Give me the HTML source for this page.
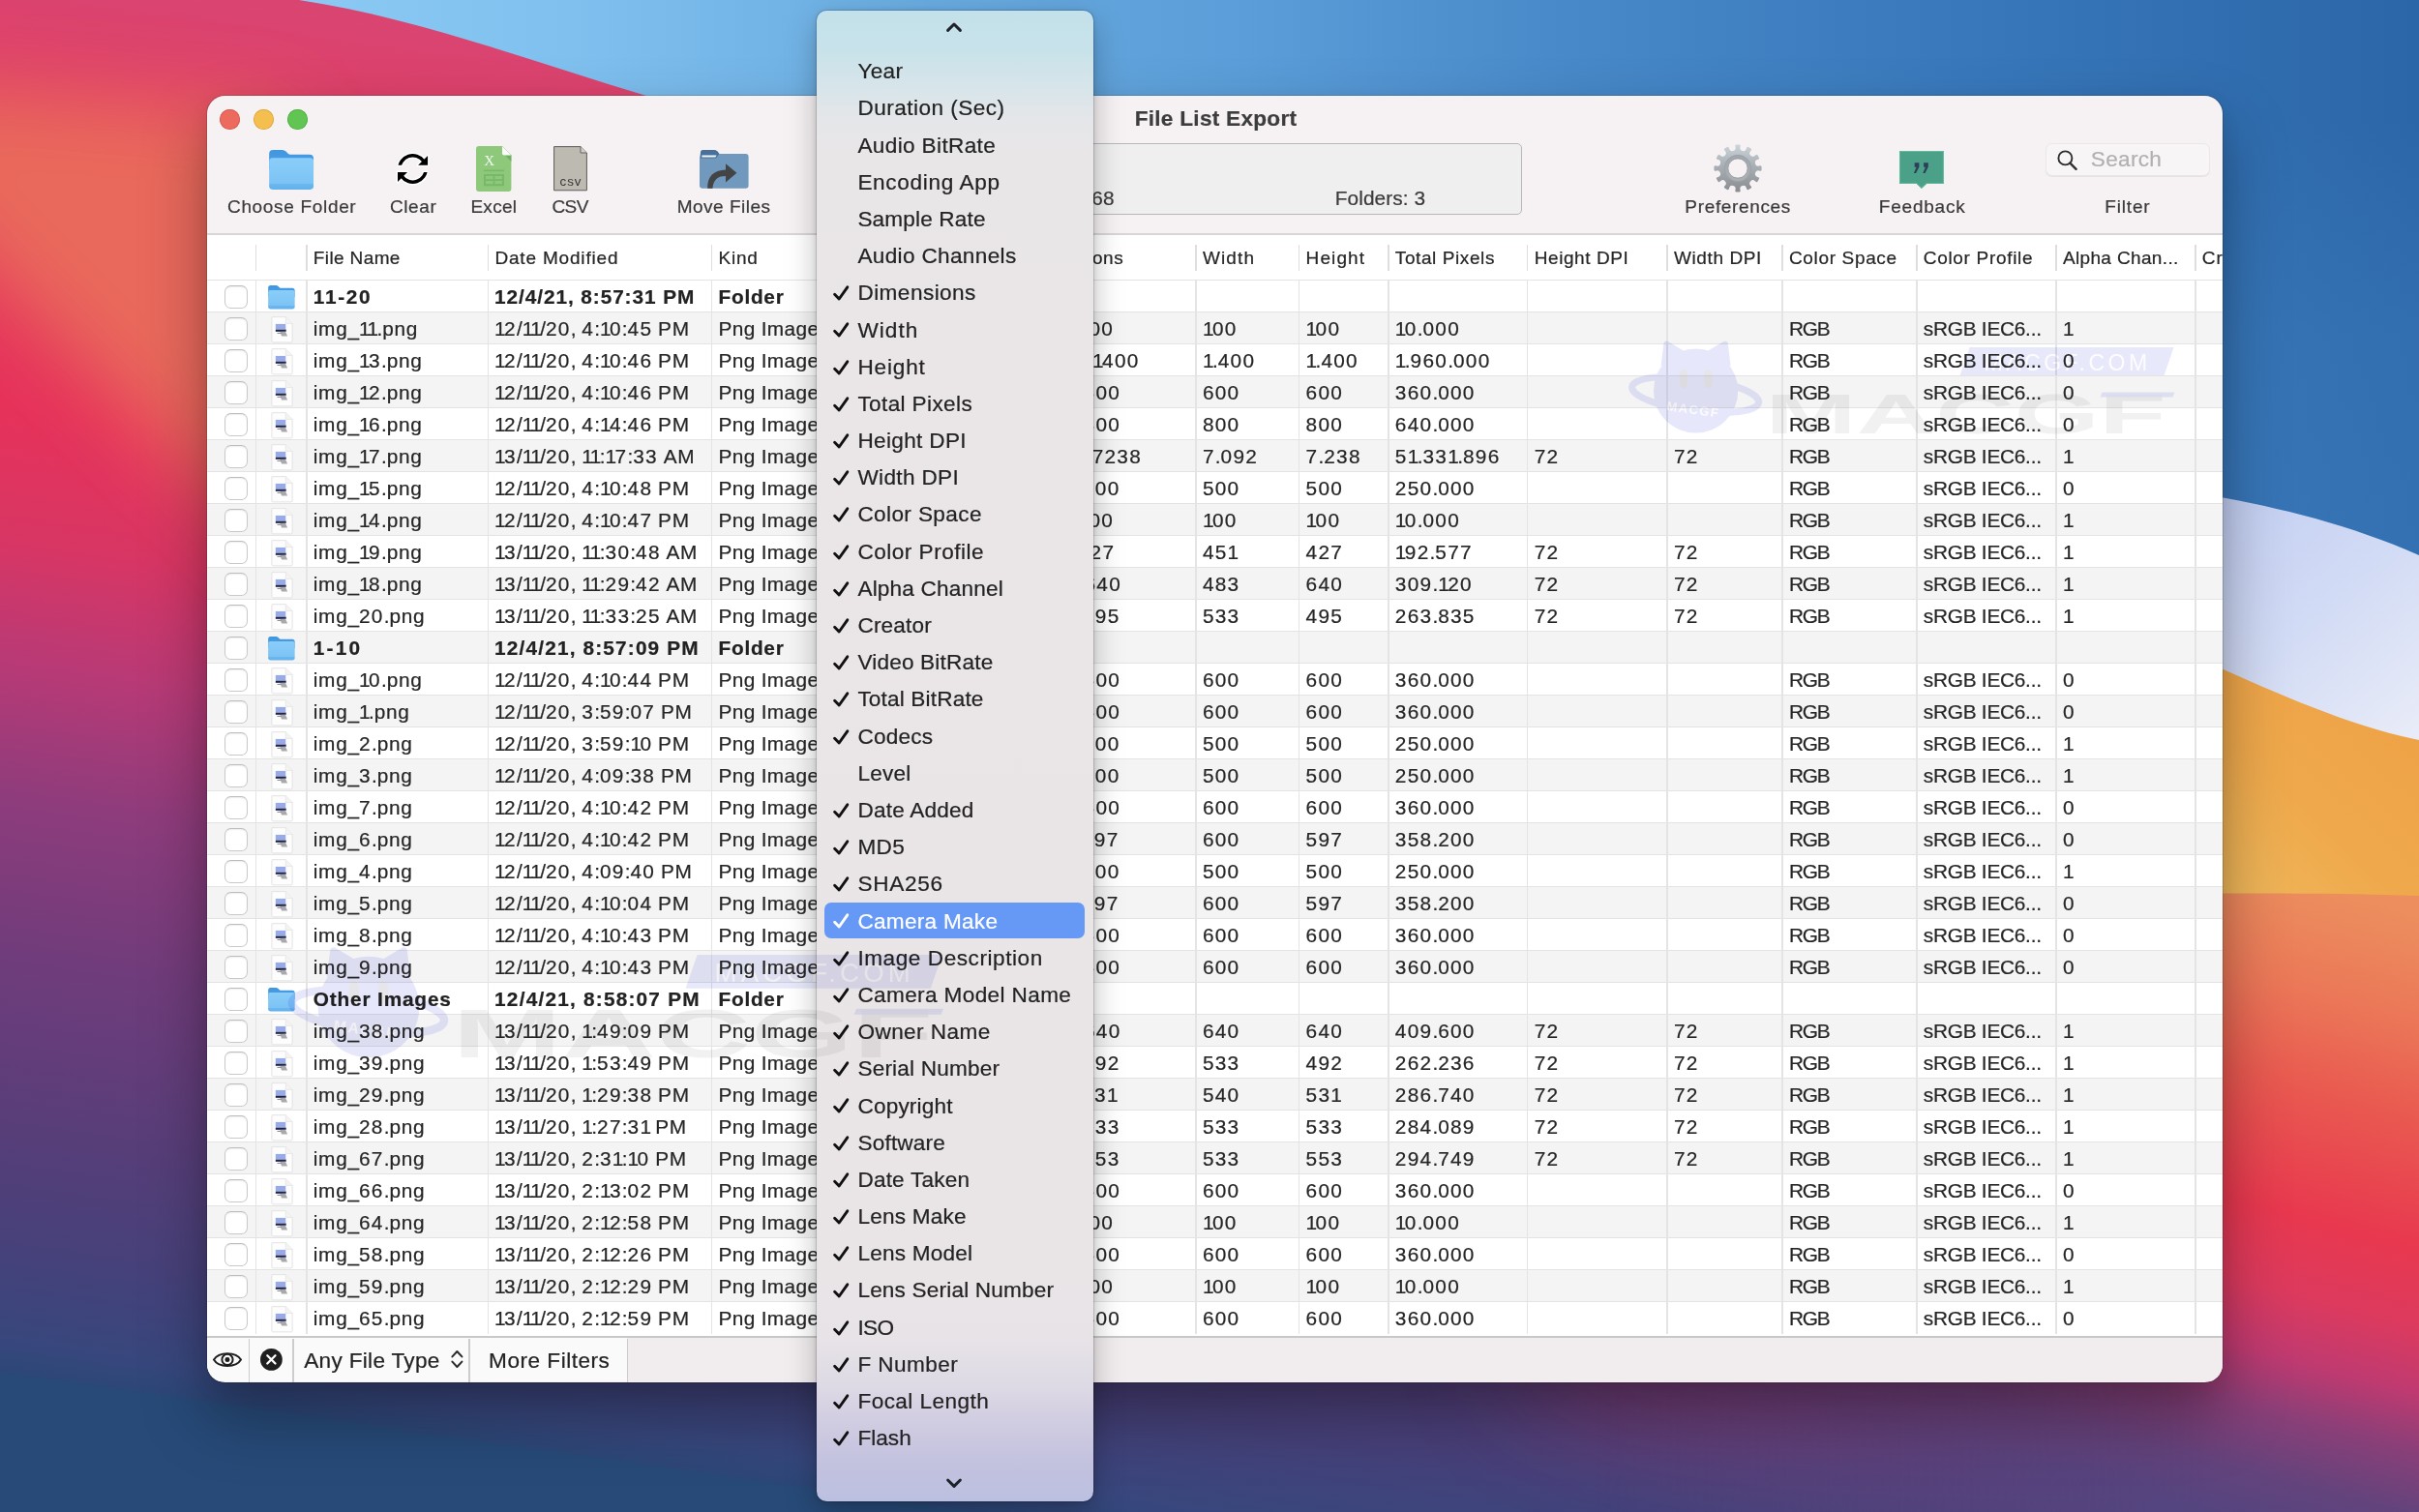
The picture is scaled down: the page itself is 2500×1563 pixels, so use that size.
<!DOCTYPE html>
<html><head><meta charset="utf-8"><title>File List Export</title>
<style>
html,body{margin:0;padding:0;}
body{width:2500px;height:1563px;overflow:hidden;position:relative;background:#3a4a78;font-family:"Liberation Sans",sans-serif;}
.t{position:absolute;white-space:nowrap;font-family:"Liberation Sans",sans-serif;-webkit-text-stroke:0.22px currentColor;}
.t i{font-style:normal}.d{letter-spacing:.062em}.o{letter-spacing:-.075em}.l{letter-spacing:.034em}
</style></head><body>

<svg id="wall" width="2500" height="1563" viewBox="0 0 2500 1563" style="position:absolute;left:0;top:0">
<defs>
  <linearGradient id="gBlue" x1="300" y1="0" x2="2500" y2="0" gradientUnits="userSpaceOnUse">
    <stop offset="0" stop-color="#8ccaf3"/>
    <stop offset="0.13" stop-color="#7fc0ef"/>
    <stop offset="0.30" stop-color="#69abe0"/>
    <stop offset="0.45" stop-color="#5a9dd8"/>
    <stop offset="0.60" stop-color="#4889c9"/>
    <stop offset="0.80" stop-color="#3777ba"/>
    <stop offset="1" stop-color="#2b66a8"/>
  </linearGradient>
  <linearGradient id="gBlueV" x1="0" y1="120" x2="0" y2="580" gradientUnits="userSpaceOnUse">
    <stop offset="0" stop-color="#4a8ccc" stop-opacity="0"/>
    <stop offset="0.5" stop-color="#4a8ccc" stop-opacity="0.22"/>
    <stop offset="1" stop-color="#4a8ccc" stop-opacity="0.28"/>
  </linearGradient>
  <!-- diagonal red->purple->navy gradient ; isolines tilted ~14.6deg -->
  <linearGradient id="gRed" gradientUnits="userSpaceOnUse" x1="320" y1="-100" x2="100" y2="1433">
    <stop offset="0" stop-color="#d4487a"/>
    <stop offset="0.08" stop-color="#da4470"/>
    <stop offset="0.22" stop-color="#e43a5e"/>
    <stop offset="0.36" stop-color="#e6325a"/>
    <stop offset="0.45" stop-color="#d83664"/>
    <stop offset="0.53" stop-color="#b83a76"/>
    <stop offset="0.62" stop-color="#8e3c7c"/>
    <stop offset="0.72" stop-color="#713c7b"/>
    <stop offset="0.84" stop-color="#573e79"/>
    <stop offset="0.92" stop-color="#46417a"/>
    <stop offset="0.98" stop-color="#37477d"/>
    <stop offset="1.04" stop-color="#2c4777"/>
    <stop offset="1.12" stop-color="#274a78"/>
  </linearGradient>
  <linearGradient id="gLight" x1="2296" y1="520" x2="2500" y2="760" gradientUnits="userSpaceOnUse">
    <stop offset="0" stop-color="#c3cff3"/>
    <stop offset="0.5" stop-color="#d3dcf5"/>
    <stop offset="1" stop-color="#e9ecf8"/>
  </linearGradient>
  <linearGradient id="gOrange" x1="2500" y1="700" x2="2296" y2="920" gradientUnits="userSpaceOnUse">
    <stop offset="0" stop-color="#eea045"/>
    <stop offset="0.6" stop-color="#efa94c"/>
    <stop offset="1" stop-color="#efb75a"/>
  </linearGradient>
  <linearGradient id="gCoral" x1="2400" y1="920" x2="2230" y2="1563" gradientUnits="userSpaceOnUse">
    <stop offset="0" stop-color="#ec8e5e"/>
    <stop offset="0.155" stop-color="#eb7858"/>
    <stop offset="0.30" stop-color="#e95a50"/>
    <stop offset="0.50" stop-color="#e8384f"/>
    <stop offset="0.62" stop-color="#dc3a5e"/>
    <stop offset="0.716" stop-color="#c03a70"/>
    <stop offset="0.806" stop-color="#8a3f78"/>
    <stop offset="0.90" stop-color="#64437c"/>
    <stop offset="0.975" stop-color="#55457f"/>
  </linearGradient>
  <linearGradient id="gMask" x1="1650" y1="0" x2="2280" y2="0" gradientUnits="userSpaceOnUse"><stop offset="0" stop-color="#000"/><stop offset="1" stop-color="#fff"/></linearGradient>
  <mask id="mCoral" maskUnits="userSpaceOnUse" x="0" y="0" width="2500" height="1563"><rect x="0" y="0" width="2500" height="1563" fill="url(#gMask)"/></mask>
  <filter id="b40" x="-50%" y="-50%" width="200%" height="200%"><feGaussianBlur stdDeviation="40"/></filter>
  <filter id="b60" x="-50%" y="-50%" width="200%" height="200%"><feGaussianBlur stdDeviation="60"/></filter>
  <filter id="b3" x="-5%" y="-5%" width="110%" height="110%"><feGaussianBlur stdDeviation="1.2"/></filter>
</defs>
<!-- base: diagonal red/purple/navy -->
<rect x="0" y="0" width="2500" height="1563" fill="url(#gRed)"/>
<!-- blue sky, bounded by curve on the left -->
<path d="M309 0 C 429 18, 548 63, 668 99 C 760 127, 1200 400, 1400 700 L 2500 700 L 2500 0 Z" fill="url(#gBlue)"/>
<!-- coral blob on the left -->
<g filter="url(#b40)">
  <path d="M-80 88 L 300 118 L 300 590 L -80 210 Z" fill="#e9695b"/>
</g>
<g filter="url(#b60)" opacity="0.6"><ellipse cx="2120" cy="1395" rx="560" ry="95" fill="#a8386e"/></g>
<rect x="2150" y="120" width="350" height="460" fill="url(#gBlueV)"/>
<!-- right side layers -->
<path d="M2200 500 C 2296 512, 2400 530, 2500 574 L 2500 800 L 2200 800 Z" fill="url(#gLight)"/>
<path d="M2200 650 C 2296 688, 2400 745, 2500 765 L 2500 1000 L 2200 1000 Z" fill="url(#gOrange)"/>
<path d="M1500 940 C 1900 930, 2296 918, 2500 926 L 2500 1563 L 1500 1563 Z" fill="url(#gCoral)" mask="url(#mCoral)"/>
</svg>

<div id="win" style="position:absolute;left:214px;top:99px;width:2082.5px;height:1329.5px;border-radius:18.5px;background:#f6f2f3;box-shadow:0 0 0 1px rgba(0,0,0,0.14),0 34px 66px rgba(0,0,0,0.34),0 8px 20px rgba(0,0,0,0.08);overflow:hidden">
<div style="position:absolute;left:-214px;top:-99px;width:2500px;height:1563px;will-change:transform">
<div style="position:absolute;left:227.4px;top:113.0px;width:20.8px;height:20.8px;border-radius:50%;background:#ec6a5e;box-shadow:inset 0 0 0 0.8px #d5544a"></div>
<div style="position:absolute;left:262.1px;top:113.0px;width:20.8px;height:20.8px;border-radius:50%;background:#f4bf4f;box-shadow:inset 0 0 0 0.8px #d9a23d"></div>
<div style="position:absolute;left:296.8px;top:113.0px;width:20.8px;height:20.8px;border-radius:50%;background:#61c554;box-shadow:inset 0 0 0 0.8px #4ca93f"></div>
<div class="t" style="left:1172.7px;top:107.9px;font-size:22.6px;line-height:29px;color:#3d3d3d;letter-spacing:0.275px;font-weight:700;">File List Export</div>
<svg style="position:absolute;left:278px;top:154.8px;overflow:visible" width="46.2" height="40.9" viewBox="0 0 46 41" ><defs>
<linearGradient id="fba" x1="0" y1="0" x2="0" y2="1"><stop offset="0" stop-color="#3f97e0"/><stop offset="1" stop-color="#4ea2e8"/></linearGradient>
<linearGradient id="ffa" x1="0" y1="0" x2="0" y2="1"><stop offset="0" stop-color="#8acdf9"/><stop offset="0.82" stop-color="#7cc3f5"/><stop offset="0.83" stop-color="#6bb7ef"/><stop offset="1" stop-color="#63b0ec"/></linearGradient></defs>
<path d="M0 4.2 Q0 0 4.2 0 H13.5 Q15.8 0 17.4 1.6 L19.6 3.8 Q20.6 4.8 22 4.8 H41.8 Q46 4.8 46 9 V20 H0 Z" fill="url(#fba)"/>
<rect x="0" y="8.2" width="46" height="32.8" rx="3.6" fill="url(#ffa)"/></svg>
<div class="t" style="left:1.7px;width:600px;text-align:center;top:201.4px;font-size:19px;line-height:25px;color:#3a3a3a;letter-spacing:0.674px;">Choose Folder</div>
<svg style="position:absolute;left:410.84999999999997px;top:158.8px;overflow:visible" width="31.1" height="30.9" viewBox="0 0 31.1 30.9" ><defs><clipPath id="rfc"><rect x="-3" y="-3" width="40" height="14.8"/></clipPath><clipPath id="rfc2"><rect x="-3" y="-3" width="40" height="16.2"/></clipPath></defs><g opacity="0.95"><path d="M1.85 15.45 A13.7 13.7 0 0 1 26.6 7.3" fill="none" stroke="#ffffff" stroke-width="6.6" clip-path="url(#rfc2)"/>
<path d="M31.1 2.0 L31.1 11.8 L21.1 11.8 Z" fill="#ffffff" stroke="#ffffff" stroke-width="3.0" stroke-linejoin="round"/><g transform="rotate(180 15.55 15.45)"><path d="M1.85 15.45 A13.7 13.7 0 0 1 26.6 7.3" fill="none" stroke="#ffffff" stroke-width="6.6" clip-path="url(#rfc2)"/>
<path d="M31.1 2.0 L31.1 11.8 L21.1 11.8 Z" fill="#ffffff" stroke="#ffffff" stroke-width="3.0" stroke-linejoin="round"/></g></g><path d="M1.85 15.45 A13.7 13.7 0 0 1 26.6 7.3" fill="none" stroke="#000000" stroke-width="3.5" clip-path="url(#rfc)"/>
<path d="M31.1 2.0 L31.1 11.8 L21.1 11.8 Z" fill="#000000" stroke="#000000" stroke-width="0" stroke-linejoin="round"/><g transform="rotate(180 15.55 15.45)"><path d="M1.85 15.45 A13.7 13.7 0 0 1 26.6 7.3" fill="none" stroke="#000000" stroke-width="3.5" clip-path="url(#rfc)"/>
<path d="M31.1 2.0 L31.1 11.8 L21.1 11.8 Z" fill="#000000" stroke="#000000" stroke-width="0" stroke-linejoin="round"/></g></svg>
<div class="t" style="left:127.2px;width:600px;text-align:center;top:201.4px;font-size:19px;line-height:25px;color:#3a3a3a;letter-spacing:0.602px;">Clear</div>
<svg style="position:absolute;left:491.9px;top:151.3px;overflow:visible" width="36.4" height="47" viewBox="0 0 36.4 47" ><path d="M3 0 H27 L36.4 9.4 V44 Q36.4 47 33.4 47 H3 Q0 47 0 44 V3 Q0 0 3 0 Z" fill="#8dc87b"/>
<path d="M27 0 L36.4 9.4 L36.4 16 L27 6.6 Z" fill="#6fb25e"/>
<path d="M27 0 L36.4 9.4 H29 Q27 9.4 27 7.4 Z" fill="#fbfdfb"/>
<text x="13.6" y="20" font-family="Liberation Serif" font-size="15" fill="#f4faf2" text-anchor="middle">X</text>
<rect x="8" y="24.6" width="21" height="1.6" fill="#79b868"/>
<rect x="8" y="29" width="21" height="12.2" fill="#79b868"/>
<rect x="10" y="31" width="7.6" height="3.2" fill="#8dc87b"/><rect x="19.4" y="31" width="7.6" height="3.2" fill="#8dc87b"/>
<rect x="10" y="36" width="7.6" height="3.2" fill="#8dc87b"/><rect x="19.4" y="36" width="7.6" height="3.2" fill="#8dc87b"/></svg>
<div class="t" style="left:210.4px;width:600px;text-align:center;top:201.4px;font-size:19px;line-height:25px;color:#3a3a3a;letter-spacing:0.312px;">Excel</div>
<svg style="position:absolute;left:571.9px;top:151.3px;overflow:visible" width="35" height="46.4" viewBox="0 0 35 46.4" ><path d="M0.6 0.6 H28 L34.4 7 V45.8 H0.6 Z" fill="#bdbab1" stroke="#5a5a58" stroke-width="1"/>
<path d="M28 0.6 V7 H34.4" fill="#d2cfc8" stroke="#5a5a58" stroke-width="0.9"/>
<text x="18" y="40.6" font-family="Liberation Sans" font-size="13.4" fill="#383838" text-anchor="middle" letter-spacing="0.9">csv</text></svg>
<div class="t" style="left:289.2px;width:600px;text-align:center;top:201.4px;font-size:19px;line-height:25px;color:#3a3a3a;letter-spacing:-0.482px;">CSV</div>
<svg style="position:absolute;left:723px;top:155px;overflow:visible" width="50.6" height="39.7" viewBox="0 0 50.6 39.7" ><path d="M1 3 Q1 0 4 0 H15 Q17 0 18.4 1.6 L20.4 4 H47.6 Q50.6 4 50.6 7 V36.7 Q50.6 39.7 47.6 39.7 H3 Q0 39.7 0 36.7 V8 Z" fill="#7099bd"/>
<path d="M1 3 Q1 0 4 0 H15 Q17 0 18.4 1.6 L20.4 4 L17 8.6 H1 Z" fill="#47709a"/>
<path d="M2.4 5.6 H17.6 L16.4 7.6 H2.4 Z" fill="#f4f7fa"/>
<path d="M8.2 39.7 C 8 28, 14 21, 27 20.6 V14.2 L38.4 23.8 L27 33.4 V27 C 19 27, 14.6 30, 13.4 39.7 Z" fill="#434446"/></svg>
<div class="t" style="left:448.1px;width:600px;text-align:center;top:201.4px;font-size:19px;line-height:25px;color:#3a3a3a;letter-spacing:0.506px;">Move Files</div>
<div style="position:absolute;left:880.0px;top:148.3px;width:692.5px;height:73.9px;box-sizing:border-box;border:1px solid #b9b7b8;border-radius:5px;background:#f0eff0"></div>
<div class="t" style="left:551.9px;width:600px;text-align:right;top:191.3px;font-size:20.8px;line-height:27px;color:#3a3a3a;letter-spacing:0.295px;">Files: 68</div>
<div class="t" style="left:1379.8px;top:191.3px;font-size:20.8px;line-height:27px;color:#3a3a3a;letter-spacing:0.087px;">Folders: 3</div>
<svg style="position:absolute;left:1771.1px;top:149.4px;overflow:visible" width="50" height="50" viewBox="0 0 50 50" ><defs><linearGradient id="gg" x1="0" y1="0" x2="0" y2="50" gradientUnits="userSpaceOnUse"><stop offset="0" stop-color="#ccd5db"/><stop offset="0.45" stop-color="#a9afb4"/><stop offset="1" stop-color="#898c91"/></linearGradient>
<linearGradient id="gg2" x1="0" y1="11" x2="0" y2="39" gradientUnits="userSpaceOnUse"><stop offset="0" stop-color="#a0a7ad"/><stop offset="1" stop-color="#adb1b4"/></linearGradient></defs>
<path d="M23.60 1.74 L26.40 1.74 L26.18 2.64 A4.65 4.65 0 0 0 35.16 5.05 L35.42 4.16 L37.84 5.56 L37.20 6.23 A4.65 4.65 0 0 0 43.77 12.80 L44.44 12.16 L45.84 14.58 L44.95 14.84 A4.65 4.65 0 0 0 47.36 23.82 L48.26 23.60 L48.26 26.40 L47.36 26.18 A4.65 4.65 0 0 0 44.95 35.16 L45.84 35.42 L44.44 37.84 L43.77 37.20 A4.65 4.65 0 0 0 37.20 43.77 L37.84 44.44 L35.42 45.84 L35.16 44.95 A4.65 4.65 0 0 0 26.18 47.36 L26.40 48.26 L23.60 48.26 L23.82 47.36 A4.65 4.65 0 0 0 14.84 44.95 L14.58 45.84 L12.16 44.44 L12.80 43.77 A4.65 4.65 0 0 0 6.23 37.20 L5.56 37.84 L4.16 35.42 L5.05 35.16 A4.65 4.65 0 0 0 2.64 26.18 L1.74 26.40 L1.74 23.60 L2.64 23.82 A4.65 4.65 0 0 0 5.05 14.84 L4.16 14.58 L5.56 12.16 L6.23 12.80 A4.65 4.65 0 0 0 12.80 6.23 L12.16 5.56 L14.58 4.16 L14.84 5.05 A4.65 4.65 0 0 0 23.82 2.64 Z" fill="url(#gg)" stroke="url(#gg)" stroke-width="2.6" stroke-linejoin="round"/>
<circle cx="25" cy="25" r="13.7" fill="url(#gg2)" stroke="#979da2" stroke-width="0.7"/>
<circle cx="25" cy="25" r="10.1" fill="#f6f2f3" stroke="#8e9499" stroke-width="0.7"/></svg>
<div class="t" style="left:1496.2px;width:600px;text-align:center;top:201.4px;font-size:19px;line-height:25px;color:#3a3a3a;letter-spacing:0.656px;">Preferences</div>
<svg style="position:absolute;left:1963px;top:156px;overflow:visible" width="45.9" height="38.9" viewBox="0 0 45.9 38.9" ><path d="M0 0 H45.9 V33.9 H28.2 L22.9 38.9 L17.7 33.9 H0 Z" fill="#4aa188"/>
<path d="M0.5 0.5 H45.4 V33.4 H28 L22.9 38.2 L17.9 33.4 H0.5 Z" fill="none" stroke="#6fc3a8" stroke-width="1" opacity="0.7"/>
<path d="M15.7 12.2 H20.4 V16.5 L17.1 22.9 H14.9 L17.6 16.8 H15.7 Z" fill="#2d3e58"/><path d="M15.7 12.2 H20.4 V16.5 L17.1 22.9 H14.9 L17.6 16.8 H15.7 Z" fill="#2d3e58" transform="translate(9.4 0)"/></svg>
<div class="t" style="left:1686.7px;width:600px;text-align:center;top:201.4px;font-size:19px;line-height:25px;color:#3a3a3a;letter-spacing:0.78px;">Feedback</div>
<div style="position:absolute;left:2113.5px;top:148.3px;width:170.6px;height:33.5px;box-sizing:border-box;border:1px solid #ebe7e9;border-radius:7px;background:#f8f5f6;box-shadow:0 1px 0.5px #e6e2e4"></div>
<svg style="position:absolute;left:2126px;top:154.6px;overflow:visible" width="21" height="21" viewBox="0 0 21 21" ><circle cx="8.4" cy="8.4" r="7" fill="none" stroke="#2f2f2f" stroke-width="1.9"/>
<path d="M13.4 13.6 L19.6 19.8" stroke="#2f2f2f" stroke-width="2.4" stroke-linecap="round"/></svg>
<div class="t" style="left:2160.8px;top:149.6px;font-size:22.6px;line-height:29px;color:#b3b0b2;letter-spacing:0.305px;">Search</div>
<div class="t" style="left:1898.9px;width:600px;text-align:center;top:201.4px;font-size:19px;line-height:25px;color:#3a3a3a;letter-spacing:0.816px;">Filter</div>
<div style="position:absolute;left:214.0px;top:241.2px;width:2082.5px;height:1.4px;background:#dad6d7"></div>
<div style="position:absolute;left:214.0px;top:242.6px;width:2082.5px;height:1138.4px;background:#fff"></div>
<div style="position:absolute;left:214.0px;top:322.7px;width:2082.5px;height:33.0px;background:#f4f4f5"></div>
<div style="position:absolute;left:214.0px;top:388.7px;width:2082.5px;height:33.0px;background:#f4f4f5"></div>
<div style="position:absolute;left:214.0px;top:454.7px;width:2082.5px;height:33.0px;background:#f4f4f5"></div>
<div style="position:absolute;left:214.0px;top:520.7px;width:2082.5px;height:33.0px;background:#f4f4f5"></div>
<div style="position:absolute;left:214.0px;top:586.7px;width:2082.5px;height:33.0px;background:#f4f4f5"></div>
<div style="position:absolute;left:214.0px;top:652.7px;width:2082.5px;height:33.0px;background:#f4f4f5"></div>
<div style="position:absolute;left:214.0px;top:718.7px;width:2082.5px;height:33.0px;background:#f4f4f5"></div>
<div style="position:absolute;left:214.0px;top:784.7px;width:2082.5px;height:33.0px;background:#f4f4f5"></div>
<div style="position:absolute;left:214.0px;top:850.7px;width:2082.5px;height:33.0px;background:#f4f4f5"></div>
<div style="position:absolute;left:214.0px;top:916.7px;width:2082.5px;height:33.0px;background:#f4f4f5"></div>
<div style="position:absolute;left:214.0px;top:982.7px;width:2082.5px;height:33.0px;background:#f4f4f5"></div>
<div style="position:absolute;left:214.0px;top:1048.7px;width:2082.5px;height:33.0px;background:#f4f4f5"></div>
<div style="position:absolute;left:214.0px;top:1114.7px;width:2082.5px;height:33.0px;background:#f4f4f5"></div>
<div style="position:absolute;left:214.0px;top:1180.7px;width:2082.5px;height:33.0px;background:#f4f4f5"></div>
<div style="position:absolute;left:214.0px;top:1246.7px;width:2082.5px;height:33.0px;background:#f4f4f5"></div>
<div style="position:absolute;left:214.0px;top:1312.7px;width:2082.5px;height:33.0px;background:#f4f4f5"></div>
<div style="position:absolute;left:214.0px;top:288.5px;width:2082.5px;height:1.6px;background:#e3e3e3"></div>
<div style="position:absolute;left:214.0px;top:321.5px;width:2082.5px;height:1.6px;background:#e3e3e3"></div>
<div style="position:absolute;left:214.0px;top:354.5px;width:2082.5px;height:1.6px;background:#e3e3e3"></div>
<div style="position:absolute;left:214.0px;top:387.5px;width:2082.5px;height:1.6px;background:#e3e3e3"></div>
<div style="position:absolute;left:214.0px;top:420.5px;width:2082.5px;height:1.6px;background:#e3e3e3"></div>
<div style="position:absolute;left:214.0px;top:453.5px;width:2082.5px;height:1.6px;background:#e3e3e3"></div>
<div style="position:absolute;left:214.0px;top:486.5px;width:2082.5px;height:1.6px;background:#e3e3e3"></div>
<div style="position:absolute;left:214.0px;top:519.5px;width:2082.5px;height:1.6px;background:#e3e3e3"></div>
<div style="position:absolute;left:214.0px;top:552.5px;width:2082.5px;height:1.6px;background:#e3e3e3"></div>
<div style="position:absolute;left:214.0px;top:585.5px;width:2082.5px;height:1.6px;background:#e3e3e3"></div>
<div style="position:absolute;left:214.0px;top:618.5px;width:2082.5px;height:1.6px;background:#e3e3e3"></div>
<div style="position:absolute;left:214.0px;top:651.5px;width:2082.5px;height:1.6px;background:#e3e3e3"></div>
<div style="position:absolute;left:214.0px;top:684.5px;width:2082.5px;height:1.6px;background:#e3e3e3"></div>
<div style="position:absolute;left:214.0px;top:717.5px;width:2082.5px;height:1.6px;background:#e3e3e3"></div>
<div style="position:absolute;left:214.0px;top:750.5px;width:2082.5px;height:1.6px;background:#e3e3e3"></div>
<div style="position:absolute;left:214.0px;top:783.5px;width:2082.5px;height:1.6px;background:#e3e3e3"></div>
<div style="position:absolute;left:214.0px;top:816.5px;width:2082.5px;height:1.6px;background:#e3e3e3"></div>
<div style="position:absolute;left:214.0px;top:849.5px;width:2082.5px;height:1.6px;background:#e3e3e3"></div>
<div style="position:absolute;left:214.0px;top:882.5px;width:2082.5px;height:1.6px;background:#e3e3e3"></div>
<div style="position:absolute;left:214.0px;top:915.5px;width:2082.5px;height:1.6px;background:#e3e3e3"></div>
<div style="position:absolute;left:214.0px;top:948.5px;width:2082.5px;height:1.6px;background:#e3e3e3"></div>
<div style="position:absolute;left:214.0px;top:981.5px;width:2082.5px;height:1.6px;background:#e3e3e3"></div>
<div style="position:absolute;left:214.0px;top:1014.5px;width:2082.5px;height:1.6px;background:#e3e3e3"></div>
<div style="position:absolute;left:214.0px;top:1047.5px;width:2082.5px;height:1.6px;background:#e3e3e3"></div>
<div style="position:absolute;left:214.0px;top:1080.5px;width:2082.5px;height:1.6px;background:#e3e3e3"></div>
<div style="position:absolute;left:214.0px;top:1113.5px;width:2082.5px;height:1.6px;background:#e3e3e3"></div>
<div style="position:absolute;left:214.0px;top:1146.5px;width:2082.5px;height:1.6px;background:#e3e3e3"></div>
<div style="position:absolute;left:214.0px;top:1179.5px;width:2082.5px;height:1.6px;background:#e3e3e3"></div>
<div style="position:absolute;left:214.0px;top:1212.5px;width:2082.5px;height:1.6px;background:#e3e3e3"></div>
<div style="position:absolute;left:214.0px;top:1245.5px;width:2082.5px;height:1.6px;background:#e3e3e3"></div>
<div style="position:absolute;left:214.0px;top:1278.5px;width:2082.5px;height:1.6px;background:#e3e3e3"></div>
<div style="position:absolute;left:214.0px;top:1311.5px;width:2082.5px;height:1.6px;background:#e3e3e3"></div>
<div style="position:absolute;left:214.0px;top:1344.5px;width:2082.5px;height:1.6px;background:#e3e3e3"></div>
<div style="position:absolute;left:263.7px;top:289.7px;width:1.6px;height:1089.0px;background:#e4e4e4"></div>
<div style="position:absolute;left:263.7px;top:252.5px;width:1.6px;height:27.3px;background:#dedede"></div>
<div style="position:absolute;left:316.0px;top:289.7px;width:1.6px;height:1089.0px;background:#e4e4e4"></div>
<div style="position:absolute;left:316.0px;top:252.5px;width:1.6px;height:27.3px;background:#dedede"></div>
<div style="position:absolute;left:503.6px;top:289.7px;width:1.6px;height:1089.0px;background:#e4e4e4"></div>
<div style="position:absolute;left:503.6px;top:252.5px;width:1.6px;height:27.3px;background:#dedede"></div>
<div style="position:absolute;left:734.7px;top:289.7px;width:1.6px;height:1089.0px;background:#e4e4e4"></div>
<div style="position:absolute;left:734.7px;top:252.5px;width:1.6px;height:27.3px;background:#dedede"></div>
<div style="position:absolute;left:1235.1px;top:289.7px;width:1.6px;height:1089.0px;background:#e4e4e4"></div>
<div style="position:absolute;left:1235.1px;top:252.5px;width:1.6px;height:27.3px;background:#dedede"></div>
<div style="position:absolute;left:1341.8px;top:289.7px;width:1.6px;height:1089.0px;background:#e4e4e4"></div>
<div style="position:absolute;left:1341.8px;top:252.5px;width:1.6px;height:27.3px;background:#dedede"></div>
<div style="position:absolute;left:1434.0px;top:289.7px;width:1.6px;height:1089.0px;background:#e4e4e4"></div>
<div style="position:absolute;left:1434.0px;top:252.5px;width:1.6px;height:27.3px;background:#dedede"></div>
<div style="position:absolute;left:1577.9px;top:289.7px;width:1.6px;height:1089.0px;background:#e4e4e4"></div>
<div style="position:absolute;left:1577.9px;top:252.5px;width:1.6px;height:27.3px;background:#dedede"></div>
<div style="position:absolute;left:1722.2px;top:289.7px;width:1.6px;height:1089.0px;background:#e4e4e4"></div>
<div style="position:absolute;left:1722.2px;top:252.5px;width:1.6px;height:27.3px;background:#dedede"></div>
<div style="position:absolute;left:1841.1px;top:289.7px;width:1.6px;height:1089.0px;background:#e4e4e4"></div>
<div style="position:absolute;left:1841.1px;top:252.5px;width:1.6px;height:27.3px;background:#dedede"></div>
<div style="position:absolute;left:1980.0px;top:289.7px;width:1.6px;height:1089.0px;background:#e4e4e4"></div>
<div style="position:absolute;left:1980.0px;top:252.5px;width:1.6px;height:27.3px;background:#dedede"></div>
<div style="position:absolute;left:2124.1px;top:289.7px;width:1.6px;height:1089.0px;background:#e4e4e4"></div>
<div style="position:absolute;left:2124.1px;top:252.5px;width:1.6px;height:27.3px;background:#dedede"></div>
<div style="position:absolute;left:2268.0px;top:289.7px;width:1.6px;height:1089.0px;background:#e4e4e4"></div>
<div style="position:absolute;left:2268.0px;top:252.5px;width:1.6px;height:27.3px;background:#dedede"></div>
<div class="t" style="left:323.8px;top:253.9px;font-size:19px;line-height:25px;color:#262626;letter-spacing:0.38px;">File Name</div>
<div class="t" style="left:511.4px;top:253.9px;font-size:19px;line-height:25px;color:#262626;letter-spacing:0.823px;">Date Modified</div>
<div class="t" style="left:742.5px;top:253.9px;font-size:19px;line-height:25px;color:#262626;letter-spacing:0.795px;">Kind</div>
<div class="t" style="left:1242.9px;top:253.9px;font-size:19px;line-height:25px;color:#262626;letter-spacing:1.159px;">Width</div>
<div class="t" style="left:1349.6px;top:253.9px;font-size:19px;line-height:25px;color:#262626;letter-spacing:1.099px;">Height</div>
<div class="t" style="left:1441.8px;top:253.9px;font-size:19px;line-height:25px;color:#262626;letter-spacing:0.591px;">Total Pixels</div>
<div class="t" style="left:1585.7px;top:253.9px;font-size:19px;line-height:25px;color:#262626;letter-spacing:0.582px;">Height DPI</div>
<div class="t" style="left:1730.0px;top:253.9px;font-size:19px;line-height:25px;color:#262626;letter-spacing:0.61px;">Width DPI</div>
<div class="t" style="left:1848.9px;top:253.9px;font-size:19px;line-height:25px;color:#262626;letter-spacing:0.665px;">Color Space</div>
<div class="t" style="left:1987.8px;top:253.9px;font-size:19px;line-height:25px;color:#262626;letter-spacing:0.681px;">Color Profile</div>
<div class="t" style="left:2131.9px;top:253.9px;font-size:19px;line-height:25px;color:#262626;letter-spacing:0.356px;">Alpha Chan...</div>
<div class="t" style="left:2275.8px;top:253.9px;font-size:19px;line-height:25px;color:#262626;letter-spacing:1.003px;">Cr</div>
<div class="t" style="left:561.3px;width:600px;text-align:right;top:253.9px;font-size:19px;line-height:25px;color:#262626;letter-spacing:0.551px;">Dimensions</div>
<div style="position:absolute;left:232.1px;top:294.7px;width:23.6px;height:24.2px;box-sizing:border-box;border:1px solid #c9c9c9;border-top-color:#bdbdbd;border-radius:6.5px;background:#fff;box-shadow:inset 0 1px 1.5px rgba(0,0,0,0.08)"></div>
<svg style="position:absolute;left:277px;top:295.2px;overflow:visible" width="27.8" height="24.5" viewBox="0 0 46 41" ><defs>
<linearGradient id="fbr0" x1="0" y1="0" x2="0" y2="1"><stop offset="0" stop-color="#3f97e0"/><stop offset="1" stop-color="#4ea2e8"/></linearGradient>
<linearGradient id="ffr0" x1="0" y1="0" x2="0" y2="1"><stop offset="0" stop-color="#8acdf9"/><stop offset="0.82" stop-color="#7cc3f5"/><stop offset="0.83" stop-color="#6bb7ef"/><stop offset="1" stop-color="#63b0ec"/></linearGradient></defs>
<path d="M0 4.2 Q0 0 4.2 0 H13.5 Q15.8 0 17.4 1.6 L19.6 3.8 Q20.6 4.8 22 4.8 H41.8 Q46 4.8 46 9 V20 H0 Z" fill="url(#fbr0)"/>
<rect x="0" y="8.2" width="46" height="32.8" rx="3.6" fill="url(#ffr0)"/></svg>
<div class="t" style="left:323.8px;top:293.1px;font-size:20.8px;line-height:27px;color:#222;letter-spacing:1.68px;font-weight:700;">11-20</div>
<div class="t" style="left:511.1px;top:293.1px;font-size:20.8px;line-height:27px;color:#222;letter-spacing:0.92px;font-weight:700;">12/4/21, 8:57:31 PM</div>
<div class="t" style="left:742.5px;top:293.1px;font-size:20.8px;line-height:27px;color:#222;letter-spacing:0.741px;font-weight:700;">Folder</div>
<div style="position:absolute;left:232.1px;top:327.7px;width:23.6px;height:24.2px;box-sizing:border-box;border:1px solid #c9c9c9;border-top-color:#bdbdbd;border-radius:6.5px;background:#fff;box-shadow:inset 0 1px 1.5px rgba(0,0,0,0.08)"></div>
<svg style="position:absolute;left:279.7px;top:326.9px;overflow:visible" width="22.8" height="27.4" viewBox="0 0 21.8 26.3" ><path d="M1 0.6 H14.6 L21.2 7.2 V24.6 Q21.2 25.8 20 25.8 H2 Q0.8 25.8 0.8 24.6 V0.8 Z" fill="#fdfdfd" stroke="#dedede" stroke-width="0.8"/>
<path d="M14.6 0.6 V7.2 H21.2" fill="#f3f3f3" stroke="#e2e2e2" stroke-width="0.7"/>
<rect x="4.6" y="7.6" width="10" height="5" fill="#97abea"/>
<rect x="4.6" y="13" width="10.4" height="2.2" fill="#1d2350"/>
<path d="M9 15.4 L14.4 15.2 L16.4 19.6 H10.6 Z" fill="#a9a9ab"/>
<rect x="6.2" y="16.2" width="4" height="1" fill="#8b8b8b"/></svg>
<div class="t" style="left:323.8px;top:326.1px;font-size:20.8px;line-height:27px;color:#262626;"><i class=l>img</i>_<i class=o>11</i>.<i class=l>png</i></div>
<div class="t" style="left:511.1px;top:326.1px;font-size:20.8px;line-height:27px;color:#262626;"><i class=o>1</i><i class=d>2</i>/<i class=o>11</i>/<i class=d>20</i>, <i class=d>4</i>:<i class=o>1</i><i class=d>0</i>:<i class=d>45</i> <i class=l>PM</i></div>
<div class="t" style="left:742.5px;top:326.1px;font-size:20.8px;line-height:27px;color:#262626;letter-spacing:0.359px;">Png Image</div>
<div class="t" style="left:551.1px;width:600px;text-align:right;top:326.1px;font-size:20.8px;line-height:27px;color:#262626;"><i class=o>1</i><i class=d>00</i><i class=l>x</i><i class=o>1</i><i class=d>00</i></div>
<div class="t" style="left:1242.9px;top:326.1px;font-size:20.8px;line-height:27px;color:#262626;"><i class=o>1</i><i class=d>00</i></div>
<div class="t" style="left:1349.6px;top:326.1px;font-size:20.8px;line-height:27px;color:#262626;"><i class=o>1</i><i class=d>00</i></div>
<div class="t" style="left:1441.8px;top:326.1px;font-size:20.8px;line-height:27px;color:#262626;"><i class=o>1</i><i class=d>0</i>.<i class=d>000</i></div>
<div class="t" style="left:1848.9px;top:326.1px;font-size:20.8px;line-height:27px;color:#262626;letter-spacing:-1.155px;">RGB</div>
<div class="t" style="left:1987.8px;top:326.1px;font-size:20.8px;line-height:27px;color:#262626;letter-spacing:-0.24px;">sRGB IEC6...</div>
<div class="t" style="left:2131.9px;top:326.1px;font-size:20.8px;line-height:27px;color:#262626;"><i class=o>1</i></div>
<div style="position:absolute;left:232.1px;top:360.7px;width:23.6px;height:24.2px;box-sizing:border-box;border:1px solid #c9c9c9;border-top-color:#bdbdbd;border-radius:6.5px;background:#fff;box-shadow:inset 0 1px 1.5px rgba(0,0,0,0.08)"></div>
<svg style="position:absolute;left:279.7px;top:359.9px;overflow:visible" width="22.8" height="27.4" viewBox="0 0 21.8 26.3" ><path d="M1 0.6 H14.6 L21.2 7.2 V24.6 Q21.2 25.8 20 25.8 H2 Q0.8 25.8 0.8 24.6 V0.8 Z" fill="#fdfdfd" stroke="#dedede" stroke-width="0.8"/>
<path d="M14.6 0.6 V7.2 H21.2" fill="#f3f3f3" stroke="#e2e2e2" stroke-width="0.7"/>
<rect x="4.6" y="7.6" width="10" height="5" fill="#97abea"/>
<rect x="4.6" y="13" width="10.4" height="2.2" fill="#1d2350"/>
<path d="M9 15.4 L14.4 15.2 L16.4 19.6 H10.6 Z" fill="#a9a9ab"/>
<rect x="6.2" y="16.2" width="4" height="1" fill="#8b8b8b"/></svg>
<div class="t" style="left:323.8px;top:359.1px;font-size:20.8px;line-height:27px;color:#262626;"><i class=l>img</i>_<i class=o>1</i><i class=d>3</i>.<i class=l>png</i></div>
<div class="t" style="left:511.1px;top:359.1px;font-size:20.8px;line-height:27px;color:#262626;"><i class=o>1</i><i class=d>2</i>/<i class=o>11</i>/<i class=d>20</i>, <i class=d>4</i>:<i class=o>1</i><i class=d>0</i>:<i class=d>46</i> <i class=l>PM</i></div>
<div class="t" style="left:742.5px;top:359.1px;font-size:20.8px;line-height:27px;color:#262626;letter-spacing:0.359px;">Png Image</div>
<div class="t" style="left:577.7px;width:600px;text-align:right;top:359.1px;font-size:20.8px;line-height:27px;color:#262626;"><i class=o>1</i><i class=d>400</i><i class=l>x</i><i class=o>1</i><i class=d>400</i></div>
<div class="t" style="left:1242.9px;top:359.1px;font-size:20.8px;line-height:27px;color:#262626;"><i class=o>1</i>.<i class=d>400</i></div>
<div class="t" style="left:1349.6px;top:359.1px;font-size:20.8px;line-height:27px;color:#262626;"><i class=o>1</i>.<i class=d>400</i></div>
<div class="t" style="left:1441.8px;top:359.1px;font-size:20.8px;line-height:27px;color:#262626;"><i class=o>1</i>.<i class=d>960</i>.<i class=d>000</i></div>
<div class="t" style="left:1848.9px;top:359.1px;font-size:20.8px;line-height:27px;color:#262626;letter-spacing:-1.155px;">RGB</div>
<div class="t" style="left:1987.8px;top:359.1px;font-size:20.8px;line-height:27px;color:#262626;letter-spacing:-0.24px;">sRGB IEC6...</div>
<div class="t" style="left:2131.9px;top:359.1px;font-size:20.8px;line-height:27px;color:#262626;"><i class=d>0</i></div>
<div style="position:absolute;left:232.1px;top:393.7px;width:23.6px;height:24.2px;box-sizing:border-box;border:1px solid #c9c9c9;border-top-color:#bdbdbd;border-radius:6.5px;background:#fff;box-shadow:inset 0 1px 1.5px rgba(0,0,0,0.08)"></div>
<svg style="position:absolute;left:279.7px;top:392.9px;overflow:visible" width="22.8" height="27.4" viewBox="0 0 21.8 26.3" ><path d="M1 0.6 H14.6 L21.2 7.2 V24.6 Q21.2 25.8 20 25.8 H2 Q0.8 25.8 0.8 24.6 V0.8 Z" fill="#fdfdfd" stroke="#dedede" stroke-width="0.8"/>
<path d="M14.6 0.6 V7.2 H21.2" fill="#f3f3f3" stroke="#e2e2e2" stroke-width="0.7"/>
<rect x="4.6" y="7.6" width="10" height="5" fill="#97abea"/>
<rect x="4.6" y="13" width="10.4" height="2.2" fill="#1d2350"/>
<path d="M9 15.4 L14.4 15.2 L16.4 19.6 H10.6 Z" fill="#a9a9ab"/>
<rect x="6.2" y="16.2" width="4" height="1" fill="#8b8b8b"/></svg>
<div class="t" style="left:323.8px;top:392.1px;font-size:20.8px;line-height:27px;color:#262626;"><i class=l>img</i>_<i class=o>1</i><i class=d>2</i>.<i class=l>png</i></div>
<div class="t" style="left:511.1px;top:392.1px;font-size:20.8px;line-height:27px;color:#262626;"><i class=o>1</i><i class=d>2</i>/<i class=o>11</i>/<i class=d>20</i>, <i class=d>4</i>:<i class=o>1</i><i class=d>0</i>:<i class=d>46</i> <i class=l>PM</i></div>
<div class="t" style="left:742.5px;top:392.1px;font-size:20.8px;line-height:27px;color:#262626;letter-spacing:0.359px;">Png Image</div>
<div class="t" style="left:558.2px;width:600px;text-align:right;top:392.1px;font-size:20.8px;line-height:27px;color:#262626;"><i class=d>600</i><i class=l>x</i><i class=d>600</i></div>
<div class="t" style="left:1242.9px;top:392.1px;font-size:20.8px;line-height:27px;color:#262626;"><i class=d>600</i></div>
<div class="t" style="left:1349.6px;top:392.1px;font-size:20.8px;line-height:27px;color:#262626;"><i class=d>600</i></div>
<div class="t" style="left:1441.8px;top:392.1px;font-size:20.8px;line-height:27px;color:#262626;"><i class=d>360</i>.<i class=d>000</i></div>
<div class="t" style="left:1848.9px;top:392.1px;font-size:20.8px;line-height:27px;color:#262626;letter-spacing:-1.155px;">RGB</div>
<div class="t" style="left:1987.8px;top:392.1px;font-size:20.8px;line-height:27px;color:#262626;letter-spacing:-0.24px;">sRGB IEC6...</div>
<div class="t" style="left:2131.9px;top:392.1px;font-size:20.8px;line-height:27px;color:#262626;"><i class=d>0</i></div>
<div style="position:absolute;left:232.1px;top:426.7px;width:23.6px;height:24.2px;box-sizing:border-box;border:1px solid #c9c9c9;border-top-color:#bdbdbd;border-radius:6.5px;background:#fff;box-shadow:inset 0 1px 1.5px rgba(0,0,0,0.08)"></div>
<svg style="position:absolute;left:279.7px;top:425.9px;overflow:visible" width="22.8" height="27.4" viewBox="0 0 21.8 26.3" ><path d="M1 0.6 H14.6 L21.2 7.2 V24.6 Q21.2 25.8 20 25.8 H2 Q0.8 25.8 0.8 24.6 V0.8 Z" fill="#fdfdfd" stroke="#dedede" stroke-width="0.8"/>
<path d="M14.6 0.6 V7.2 H21.2" fill="#f3f3f3" stroke="#e2e2e2" stroke-width="0.7"/>
<rect x="4.6" y="7.6" width="10" height="5" fill="#97abea"/>
<rect x="4.6" y="13" width="10.4" height="2.2" fill="#1d2350"/>
<path d="M9 15.4 L14.4 15.2 L16.4 19.6 H10.6 Z" fill="#a9a9ab"/>
<rect x="6.2" y="16.2" width="4" height="1" fill="#8b8b8b"/></svg>
<div class="t" style="left:323.8px;top:425.1px;font-size:20.8px;line-height:27px;color:#262626;"><i class=l>img</i>_<i class=o>1</i><i class=d>6</i>.<i class=l>png</i></div>
<div class="t" style="left:511.1px;top:425.1px;font-size:20.8px;line-height:27px;color:#262626;"><i class=o>1</i><i class=d>2</i>/<i class=o>11</i>/<i class=d>20</i>, <i class=d>4</i>:<i class=o>1</i><i class=d>4</i>:<i class=d>46</i> <i class=l>PM</i></div>
<div class="t" style="left:742.5px;top:425.1px;font-size:20.8px;line-height:27px;color:#262626;letter-spacing:0.359px;">Png Image</div>
<div class="t" style="left:558.2px;width:600px;text-align:right;top:425.1px;font-size:20.8px;line-height:27px;color:#262626;"><i class=d>800</i><i class=l>x</i><i class=d>800</i></div>
<div class="t" style="left:1242.9px;top:425.1px;font-size:20.8px;line-height:27px;color:#262626;"><i class=d>800</i></div>
<div class="t" style="left:1349.6px;top:425.1px;font-size:20.8px;line-height:27px;color:#262626;"><i class=d>800</i></div>
<div class="t" style="left:1441.8px;top:425.1px;font-size:20.8px;line-height:27px;color:#262626;"><i class=d>640</i>.<i class=d>000</i></div>
<div class="t" style="left:1848.9px;top:425.1px;font-size:20.8px;line-height:27px;color:#262626;letter-spacing:-1.155px;">RGB</div>
<div class="t" style="left:1987.8px;top:425.1px;font-size:20.8px;line-height:27px;color:#262626;letter-spacing:-0.24px;">sRGB IEC6...</div>
<div class="t" style="left:2131.9px;top:425.1px;font-size:20.8px;line-height:27px;color:#262626;"><i class=d>0</i></div>
<div style="position:absolute;left:232.1px;top:459.7px;width:23.6px;height:24.2px;box-sizing:border-box;border:1px solid #c9c9c9;border-top-color:#bdbdbd;border-radius:6.5px;background:#fff;box-shadow:inset 0 1px 1.5px rgba(0,0,0,0.08)"></div>
<svg style="position:absolute;left:279.7px;top:458.9px;overflow:visible" width="22.8" height="27.4" viewBox="0 0 21.8 26.3" ><path d="M1 0.6 H14.6 L21.2 7.2 V24.6 Q21.2 25.8 20 25.8 H2 Q0.8 25.8 0.8 24.6 V0.8 Z" fill="#fdfdfd" stroke="#dedede" stroke-width="0.8"/>
<path d="M14.6 0.6 V7.2 H21.2" fill="#f3f3f3" stroke="#e2e2e2" stroke-width="0.7"/>
<rect x="4.6" y="7.6" width="10" height="5" fill="#97abea"/>
<rect x="4.6" y="13" width="10.4" height="2.2" fill="#1d2350"/>
<path d="M9 15.4 L14.4 15.2 L16.4 19.6 H10.6 Z" fill="#a9a9ab"/>
<rect x="6.2" y="16.2" width="4" height="1" fill="#8b8b8b"/></svg>
<div class="t" style="left:323.8px;top:458.1px;font-size:20.8px;line-height:27px;color:#262626;"><i class=l>img</i>_<i class=o>1</i><i class=d>7</i>.<i class=l>png</i></div>
<div class="t" style="left:511.1px;top:458.1px;font-size:20.8px;line-height:27px;color:#262626;"><i class=o>1</i><i class=d>3</i>/<i class=o>11</i>/<i class=d>20</i>, <i class=o>11</i>:<i class=o>1</i><i class=d>7</i>:<i class=d>33</i> <i class=l>AM</i></div>
<div class="t" style="left:742.5px;top:458.1px;font-size:20.8px;line-height:27px;color:#262626;letter-spacing:0.359px;">Png Image</div>
<div class="t" style="left:580.1px;width:600px;text-align:right;top:458.1px;font-size:20.8px;line-height:27px;color:#262626;"><i class=d>7092</i><i class=l>x</i><i class=d>7238</i></div>
<div class="t" style="left:1242.9px;top:458.1px;font-size:20.8px;line-height:27px;color:#262626;"><i class=d>7</i>.<i class=d>092</i></div>
<div class="t" style="left:1349.6px;top:458.1px;font-size:20.8px;line-height:27px;color:#262626;"><i class=d>7</i>.<i class=d>238</i></div>
<div class="t" style="left:1441.8px;top:458.1px;font-size:20.8px;line-height:27px;color:#262626;"><i class=d>5</i><i class=o>1</i>.<i class=d>33</i><i class=o>1</i>.<i class=d>896</i></div>
<div class="t" style="left:1585.7px;top:458.1px;font-size:20.8px;line-height:27px;color:#262626;"><i class=d>72</i></div>
<div class="t" style="left:1730.0px;top:458.1px;font-size:20.8px;line-height:27px;color:#262626;"><i class=d>72</i></div>
<div class="t" style="left:1848.9px;top:458.1px;font-size:20.8px;line-height:27px;color:#262626;letter-spacing:-1.155px;">RGB</div>
<div class="t" style="left:1987.8px;top:458.1px;font-size:20.8px;line-height:27px;color:#262626;letter-spacing:-0.24px;">sRGB IEC6...</div>
<div class="t" style="left:2131.9px;top:458.1px;font-size:20.8px;line-height:27px;color:#262626;"><i class=o>1</i></div>
<div style="position:absolute;left:232.1px;top:492.7px;width:23.6px;height:24.2px;box-sizing:border-box;border:1px solid #c9c9c9;border-top-color:#bdbdbd;border-radius:6.5px;background:#fff;box-shadow:inset 0 1px 1.5px rgba(0,0,0,0.08)"></div>
<svg style="position:absolute;left:279.7px;top:491.9px;overflow:visible" width="22.8" height="27.4" viewBox="0 0 21.8 26.3" ><path d="M1 0.6 H14.6 L21.2 7.2 V24.6 Q21.2 25.8 20 25.8 H2 Q0.8 25.8 0.8 24.6 V0.8 Z" fill="#fdfdfd" stroke="#dedede" stroke-width="0.8"/>
<path d="M14.6 0.6 V7.2 H21.2" fill="#f3f3f3" stroke="#e2e2e2" stroke-width="0.7"/>
<rect x="4.6" y="7.6" width="10" height="5" fill="#97abea"/>
<rect x="4.6" y="13" width="10.4" height="2.2" fill="#1d2350"/>
<path d="M9 15.4 L14.4 15.2 L16.4 19.6 H10.6 Z" fill="#a9a9ab"/>
<rect x="6.2" y="16.2" width="4" height="1" fill="#8b8b8b"/></svg>
<div class="t" style="left:323.8px;top:491.1px;font-size:20.8px;line-height:27px;color:#262626;"><i class=l>img</i>_<i class=o>1</i><i class=d>5</i>.<i class=l>png</i></div>
<div class="t" style="left:511.1px;top:491.1px;font-size:20.8px;line-height:27px;color:#262626;"><i class=o>1</i><i class=d>2</i>/<i class=o>11</i>/<i class=d>20</i>, <i class=d>4</i>:<i class=o>1</i><i class=d>0</i>:<i class=d>48</i> <i class=l>PM</i></div>
<div class="t" style="left:742.5px;top:491.1px;font-size:20.8px;line-height:27px;color:#262626;letter-spacing:0.359px;">Png Image</div>
<div class="t" style="left:557.5px;width:600px;text-align:right;top:491.1px;font-size:20.8px;line-height:27px;color:#262626;"><i class=d>500</i><i class=l>x</i><i class=d>500</i></div>
<div class="t" style="left:1242.9px;top:491.1px;font-size:20.8px;line-height:27px;color:#262626;"><i class=d>500</i></div>
<div class="t" style="left:1349.6px;top:491.1px;font-size:20.8px;line-height:27px;color:#262626;"><i class=d>500</i></div>
<div class="t" style="left:1441.8px;top:491.1px;font-size:20.8px;line-height:27px;color:#262626;"><i class=d>250</i>.<i class=d>000</i></div>
<div class="t" style="left:1848.9px;top:491.1px;font-size:20.8px;line-height:27px;color:#262626;letter-spacing:-1.155px;">RGB</div>
<div class="t" style="left:1987.8px;top:491.1px;font-size:20.8px;line-height:27px;color:#262626;letter-spacing:-0.24px;">sRGB IEC6...</div>
<div class="t" style="left:2131.9px;top:491.1px;font-size:20.8px;line-height:27px;color:#262626;"><i class=d>0</i></div>
<div style="position:absolute;left:232.1px;top:525.7px;width:23.6px;height:24.2px;box-sizing:border-box;border:1px solid #c9c9c9;border-top-color:#bdbdbd;border-radius:6.5px;background:#fff;box-shadow:inset 0 1px 1.5px rgba(0,0,0,0.08)"></div>
<svg style="position:absolute;left:279.7px;top:524.9000000000001px;overflow:visible" width="22.8" height="27.4" viewBox="0 0 21.8 26.3" ><path d="M1 0.6 H14.6 L21.2 7.2 V24.6 Q21.2 25.8 20 25.8 H2 Q0.8 25.8 0.8 24.6 V0.8 Z" fill="#fdfdfd" stroke="#dedede" stroke-width="0.8"/>
<path d="M14.6 0.6 V7.2 H21.2" fill="#f3f3f3" stroke="#e2e2e2" stroke-width="0.7"/>
<rect x="4.6" y="7.6" width="10" height="5" fill="#97abea"/>
<rect x="4.6" y="13" width="10.4" height="2.2" fill="#1d2350"/>
<path d="M9 15.4 L14.4 15.2 L16.4 19.6 H10.6 Z" fill="#a9a9ab"/>
<rect x="6.2" y="16.2" width="4" height="1" fill="#8b8b8b"/></svg>
<div class="t" style="left:323.8px;top:524.1px;font-size:20.8px;line-height:27px;color:#262626;"><i class=l>img</i>_<i class=o>1</i><i class=d>4</i>.<i class=l>png</i></div>
<div class="t" style="left:511.1px;top:524.1px;font-size:20.8px;line-height:27px;color:#262626;"><i class=o>1</i><i class=d>2</i>/<i class=o>11</i>/<i class=d>20</i>, <i class=d>4</i>:<i class=o>1</i><i class=d>0</i>:<i class=d>47</i> <i class=l>PM</i></div>
<div class="t" style="left:742.5px;top:524.1px;font-size:20.8px;line-height:27px;color:#262626;letter-spacing:0.359px;">Png Image</div>
<div class="t" style="left:551.1px;width:600px;text-align:right;top:524.1px;font-size:20.8px;line-height:27px;color:#262626;"><i class=o>1</i><i class=d>00</i><i class=l>x</i><i class=o>1</i><i class=d>00</i></div>
<div class="t" style="left:1242.9px;top:524.1px;font-size:20.8px;line-height:27px;color:#262626;"><i class=o>1</i><i class=d>00</i></div>
<div class="t" style="left:1349.6px;top:524.1px;font-size:20.8px;line-height:27px;color:#262626;"><i class=o>1</i><i class=d>00</i></div>
<div class="t" style="left:1441.8px;top:524.1px;font-size:20.8px;line-height:27px;color:#262626;"><i class=o>1</i><i class=d>0</i>.<i class=d>000</i></div>
<div class="t" style="left:1848.9px;top:524.1px;font-size:20.8px;line-height:27px;color:#262626;letter-spacing:-1.155px;">RGB</div>
<div class="t" style="left:1987.8px;top:524.1px;font-size:20.8px;line-height:27px;color:#262626;letter-spacing:-0.24px;">sRGB IEC6...</div>
<div class="t" style="left:2131.9px;top:524.1px;font-size:20.8px;line-height:27px;color:#262626;"><i class=o>1</i></div>
<div style="position:absolute;left:232.1px;top:558.7px;width:23.6px;height:24.2px;box-sizing:border-box;border:1px solid #c9c9c9;border-top-color:#bdbdbd;border-radius:6.5px;background:#fff;box-shadow:inset 0 1px 1.5px rgba(0,0,0,0.08)"></div>
<svg style="position:absolute;left:279.7px;top:557.9000000000001px;overflow:visible" width="22.8" height="27.4" viewBox="0 0 21.8 26.3" ><path d="M1 0.6 H14.6 L21.2 7.2 V24.6 Q21.2 25.8 20 25.8 H2 Q0.8 25.8 0.8 24.6 V0.8 Z" fill="#fdfdfd" stroke="#dedede" stroke-width="0.8"/>
<path d="M14.6 0.6 V7.2 H21.2" fill="#f3f3f3" stroke="#e2e2e2" stroke-width="0.7"/>
<rect x="4.6" y="7.6" width="10" height="5" fill="#97abea"/>
<rect x="4.6" y="13" width="10.4" height="2.2" fill="#1d2350"/>
<path d="M9 15.4 L14.4 15.2 L16.4 19.6 H10.6 Z" fill="#a9a9ab"/>
<rect x="6.2" y="16.2" width="4" height="1" fill="#8b8b8b"/></svg>
<div class="t" style="left:323.8px;top:557.1px;font-size:20.8px;line-height:27px;color:#262626;"><i class=l>img</i>_<i class=o>1</i><i class=d>9</i>.<i class=l>png</i></div>
<div class="t" style="left:511.1px;top:557.1px;font-size:20.8px;line-height:27px;color:#262626;"><i class=o>1</i><i class=d>3</i>/<i class=o>11</i>/<i class=d>20</i>, <i class=o>11</i>:<i class=d>30</i>:<i class=d>48</i> <i class=l>AM</i></div>
<div class="t" style="left:742.5px;top:557.1px;font-size:20.8px;line-height:27px;color:#262626;letter-spacing:0.359px;">Png Image</div>
<div class="t" style="left:552.3px;width:600px;text-align:right;top:557.1px;font-size:20.8px;line-height:27px;color:#262626;"><i class=d>45</i><i class=o>1</i><i class=l>x</i><i class=d>427</i></div>
<div class="t" style="left:1242.9px;top:557.1px;font-size:20.8px;line-height:27px;color:#262626;"><i class=d>45</i><i class=o>1</i></div>
<div class="t" style="left:1349.6px;top:557.1px;font-size:20.8px;line-height:27px;color:#262626;"><i class=d>427</i></div>
<div class="t" style="left:1441.8px;top:557.1px;font-size:20.8px;line-height:27px;color:#262626;"><i class=o>1</i><i class=d>92</i>.<i class=d>577</i></div>
<div class="t" style="left:1585.7px;top:557.1px;font-size:20.8px;line-height:27px;color:#262626;"><i class=d>72</i></div>
<div class="t" style="left:1730.0px;top:557.1px;font-size:20.8px;line-height:27px;color:#262626;"><i class=d>72</i></div>
<div class="t" style="left:1848.9px;top:557.1px;font-size:20.8px;line-height:27px;color:#262626;letter-spacing:-1.155px;">RGB</div>
<div class="t" style="left:1987.8px;top:557.1px;font-size:20.8px;line-height:27px;color:#262626;letter-spacing:-0.24px;">sRGB IEC6...</div>
<div class="t" style="left:2131.9px;top:557.1px;font-size:20.8px;line-height:27px;color:#262626;"><i class=o>1</i></div>
<div style="position:absolute;left:232.1px;top:591.7px;width:23.6px;height:24.2px;box-sizing:border-box;border:1px solid #c9c9c9;border-top-color:#bdbdbd;border-radius:6.5px;background:#fff;box-shadow:inset 0 1px 1.5px rgba(0,0,0,0.08)"></div>
<svg style="position:absolute;left:279.7px;top:590.9000000000001px;overflow:visible" width="22.8" height="27.4" viewBox="0 0 21.8 26.3" ><path d="M1 0.6 H14.6 L21.2 7.2 V24.6 Q21.2 25.8 20 25.8 H2 Q0.8 25.8 0.8 24.6 V0.8 Z" fill="#fdfdfd" stroke="#dedede" stroke-width="0.8"/>
<path d="M14.6 0.6 V7.2 H21.2" fill="#f3f3f3" stroke="#e2e2e2" stroke-width="0.7"/>
<rect x="4.6" y="7.6" width="10" height="5" fill="#97abea"/>
<rect x="4.6" y="13" width="10.4" height="2.2" fill="#1d2350"/>
<path d="M9 15.4 L14.4 15.2 L16.4 19.6 H10.6 Z" fill="#a9a9ab"/>
<rect x="6.2" y="16.2" width="4" height="1" fill="#8b8b8b"/></svg>
<div class="t" style="left:323.8px;top:590.1px;font-size:20.8px;line-height:27px;color:#262626;"><i class=l>img</i>_<i class=o>1</i><i class=d>8</i>.<i class=l>png</i></div>
<div class="t" style="left:511.1px;top:590.1px;font-size:20.8px;line-height:27px;color:#262626;"><i class=o>1</i><i class=d>3</i>/<i class=o>11</i>/<i class=d>20</i>, <i class=o>11</i>:<i class=d>29</i>:<i class=d>42</i> <i class=l>AM</i></div>
<div class="t" style="left:742.5px;top:590.1px;font-size:20.8px;line-height:27px;color:#262626;letter-spacing:0.359px;">Png Image</div>
<div class="t" style="left:559.0px;width:600px;text-align:right;top:590.1px;font-size:20.8px;line-height:27px;color:#262626;"><i class=d>483</i><i class=l>x</i><i class=d>640</i></div>
<div class="t" style="left:1242.9px;top:590.1px;font-size:20.8px;line-height:27px;color:#262626;"><i class=d>483</i></div>
<div class="t" style="left:1349.6px;top:590.1px;font-size:20.8px;line-height:27px;color:#262626;"><i class=d>640</i></div>
<div class="t" style="left:1441.8px;top:590.1px;font-size:20.8px;line-height:27px;color:#262626;"><i class=d>309</i>.<i class=o>1</i><i class=d>20</i></div>
<div class="t" style="left:1585.7px;top:590.1px;font-size:20.8px;line-height:27px;color:#262626;"><i class=d>72</i></div>
<div class="t" style="left:1730.0px;top:590.1px;font-size:20.8px;line-height:27px;color:#262626;"><i class=d>72</i></div>
<div class="t" style="left:1848.9px;top:590.1px;font-size:20.8px;line-height:27px;color:#262626;letter-spacing:-1.155px;">RGB</div>
<div class="t" style="left:1987.8px;top:590.1px;font-size:20.8px;line-height:27px;color:#262626;letter-spacing:-0.24px;">sRGB IEC6...</div>
<div class="t" style="left:2131.9px;top:590.1px;font-size:20.8px;line-height:27px;color:#262626;"><i class=o>1</i></div>
<div style="position:absolute;left:232.1px;top:624.7px;width:23.6px;height:24.2px;box-sizing:border-box;border:1px solid #c9c9c9;border-top-color:#bdbdbd;border-radius:6.5px;background:#fff;box-shadow:inset 0 1px 1.5px rgba(0,0,0,0.08)"></div>
<svg style="position:absolute;left:279.7px;top:623.9000000000001px;overflow:visible" width="22.8" height="27.4" viewBox="0 0 21.8 26.3" ><path d="M1 0.6 H14.6 L21.2 7.2 V24.6 Q21.2 25.8 20 25.8 H2 Q0.8 25.8 0.8 24.6 V0.8 Z" fill="#fdfdfd" stroke="#dedede" stroke-width="0.8"/>
<path d="M14.6 0.6 V7.2 H21.2" fill="#f3f3f3" stroke="#e2e2e2" stroke-width="0.7"/>
<rect x="4.6" y="7.6" width="10" height="5" fill="#97abea"/>
<rect x="4.6" y="13" width="10.4" height="2.2" fill="#1d2350"/>
<path d="M9 15.4 L14.4 15.2 L16.4 19.6 H10.6 Z" fill="#a9a9ab"/>
<rect x="6.2" y="16.2" width="4" height="1" fill="#8b8b8b"/></svg>
<div class="t" style="left:323.8px;top:623.1px;font-size:20.8px;line-height:27px;color:#262626;"><i class=l>img</i>_<i class=d>20</i>.<i class=l>png</i></div>
<div class="t" style="left:511.1px;top:623.1px;font-size:20.8px;line-height:27px;color:#262626;"><i class=o>1</i><i class=d>3</i>/<i class=o>11</i>/<i class=d>20</i>, <i class=o>11</i>:<i class=d>33</i>:<i class=d>25</i> <i class=l>AM</i></div>
<div class="t" style="left:742.5px;top:623.1px;font-size:20.8px;line-height:27px;color:#262626;letter-spacing:0.359px;">Png Image</div>
<div class="t" style="left:557.5px;width:600px;text-align:right;top:623.1px;font-size:20.8px;line-height:27px;color:#262626;"><i class=d>533</i><i class=l>x</i><i class=d>495</i></div>
<div class="t" style="left:1242.9px;top:623.1px;font-size:20.8px;line-height:27px;color:#262626;"><i class=d>533</i></div>
<div class="t" style="left:1349.6px;top:623.1px;font-size:20.8px;line-height:27px;color:#262626;"><i class=d>495</i></div>
<div class="t" style="left:1441.8px;top:623.1px;font-size:20.8px;line-height:27px;color:#262626;"><i class=d>263</i>.<i class=d>835</i></div>
<div class="t" style="left:1585.7px;top:623.1px;font-size:20.8px;line-height:27px;color:#262626;"><i class=d>72</i></div>
<div class="t" style="left:1730.0px;top:623.1px;font-size:20.8px;line-height:27px;color:#262626;"><i class=d>72</i></div>
<div class="t" style="left:1848.9px;top:623.1px;font-size:20.8px;line-height:27px;color:#262626;letter-spacing:-1.155px;">RGB</div>
<div class="t" style="left:1987.8px;top:623.1px;font-size:20.8px;line-height:27px;color:#262626;letter-spacing:-0.24px;">sRGB IEC6...</div>
<div class="t" style="left:2131.9px;top:623.1px;font-size:20.8px;line-height:27px;color:#262626;"><i class=o>1</i></div>
<div style="position:absolute;left:232.1px;top:657.7px;width:23.6px;height:24.2px;box-sizing:border-box;border:1px solid #c9c9c9;border-top-color:#bdbdbd;border-radius:6.5px;background:#fff;box-shadow:inset 0 1px 1.5px rgba(0,0,0,0.08)"></div>
<svg style="position:absolute;left:277px;top:658.2px;overflow:visible" width="27.8" height="24.5" viewBox="0 0 46 41" ><defs>
<linearGradient id="fbr11" x1="0" y1="0" x2="0" y2="1"><stop offset="0" stop-color="#3f97e0"/><stop offset="1" stop-color="#4ea2e8"/></linearGradient>
<linearGradient id="ffr11" x1="0" y1="0" x2="0" y2="1"><stop offset="0" stop-color="#8acdf9"/><stop offset="0.82" stop-color="#7cc3f5"/><stop offset="0.83" stop-color="#6bb7ef"/><stop offset="1" stop-color="#63b0ec"/></linearGradient></defs>
<path d="M0 4.2 Q0 0 4.2 0 H13.5 Q15.8 0 17.4 1.6 L19.6 3.8 Q20.6 4.8 22 4.8 H41.8 Q46 4.8 46 9 V20 H0 Z" fill="url(#fbr11)"/>
<rect x="0" y="8.2" width="46" height="32.8" rx="3.6" fill="url(#ffr11)"/></svg>
<div class="t" style="left:323.8px;top:656.1px;font-size:20.8px;line-height:27px;color:#222;letter-spacing:2.214px;font-weight:700;">1-10</div>
<div class="t" style="left:511.1px;top:656.1px;font-size:20.8px;line-height:27px;color:#222;letter-spacing:1.164px;font-weight:700;">12/4/21, 8:57:09 PM</div>
<div class="t" style="left:742.5px;top:656.1px;font-size:20.8px;line-height:27px;color:#222;letter-spacing:0.741px;font-weight:700;">Folder</div>
<div style="position:absolute;left:232.1px;top:690.7px;width:23.6px;height:24.2px;box-sizing:border-box;border:1px solid #c9c9c9;border-top-color:#bdbdbd;border-radius:6.5px;background:#fff;box-shadow:inset 0 1px 1.5px rgba(0,0,0,0.08)"></div>
<svg style="position:absolute;left:279.7px;top:689.9000000000001px;overflow:visible" width="22.8" height="27.4" viewBox="0 0 21.8 26.3" ><path d="M1 0.6 H14.6 L21.2 7.2 V24.6 Q21.2 25.8 20 25.8 H2 Q0.8 25.8 0.8 24.6 V0.8 Z" fill="#fdfdfd" stroke="#dedede" stroke-width="0.8"/>
<path d="M14.6 0.6 V7.2 H21.2" fill="#f3f3f3" stroke="#e2e2e2" stroke-width="0.7"/>
<rect x="4.6" y="7.6" width="10" height="5" fill="#97abea"/>
<rect x="4.6" y="13" width="10.4" height="2.2" fill="#1d2350"/>
<path d="M9 15.4 L14.4 15.2 L16.4 19.6 H10.6 Z" fill="#a9a9ab"/>
<rect x="6.2" y="16.2" width="4" height="1" fill="#8b8b8b"/></svg>
<div class="t" style="left:323.8px;top:689.1px;font-size:20.8px;line-height:27px;color:#262626;"><i class=l>img</i>_<i class=o>1</i><i class=d>0</i>.<i class=l>png</i></div>
<div class="t" style="left:511.1px;top:689.1px;font-size:20.8px;line-height:27px;color:#262626;"><i class=o>1</i><i class=d>2</i>/<i class=o>11</i>/<i class=d>20</i>, <i class=d>4</i>:<i class=o>1</i><i class=d>0</i>:<i class=d>44</i> <i class=l>PM</i></div>
<div class="t" style="left:742.5px;top:689.1px;font-size:20.8px;line-height:27px;color:#262626;letter-spacing:0.359px;">Png Image</div>
<div class="t" style="left:558.2px;width:600px;text-align:right;top:689.1px;font-size:20.8px;line-height:27px;color:#262626;"><i class=d>600</i><i class=l>x</i><i class=d>600</i></div>
<div class="t" style="left:1242.9px;top:689.1px;font-size:20.8px;line-height:27px;color:#262626;"><i class=d>600</i></div>
<div class="t" style="left:1349.6px;top:689.1px;font-size:20.8px;line-height:27px;color:#262626;"><i class=d>600</i></div>
<div class="t" style="left:1441.8px;top:689.1px;font-size:20.8px;line-height:27px;color:#262626;"><i class=d>360</i>.<i class=d>000</i></div>
<div class="t" style="left:1848.9px;top:689.1px;font-size:20.8px;line-height:27px;color:#262626;letter-spacing:-1.155px;">RGB</div>
<div class="t" style="left:1987.8px;top:689.1px;font-size:20.8px;line-height:27px;color:#262626;letter-spacing:-0.24px;">sRGB IEC6...</div>
<div class="t" style="left:2131.9px;top:689.1px;font-size:20.8px;line-height:27px;color:#262626;"><i class=d>0</i></div>
<div style="position:absolute;left:232.1px;top:723.7px;width:23.6px;height:24.2px;box-sizing:border-box;border:1px solid #c9c9c9;border-top-color:#bdbdbd;border-radius:6.5px;background:#fff;box-shadow:inset 0 1px 1.5px rgba(0,0,0,0.08)"></div>
<svg style="position:absolute;left:279.7px;top:722.9000000000001px;overflow:visible" width="22.8" height="27.4" viewBox="0 0 21.8 26.3" ><path d="M1 0.6 H14.6 L21.2 7.2 V24.6 Q21.2 25.8 20 25.8 H2 Q0.8 25.8 0.8 24.6 V0.8 Z" fill="#fdfdfd" stroke="#dedede" stroke-width="0.8"/>
<path d="M14.6 0.6 V7.2 H21.2" fill="#f3f3f3" stroke="#e2e2e2" stroke-width="0.7"/>
<rect x="4.6" y="7.6" width="10" height="5" fill="#97abea"/>
<rect x="4.6" y="13" width="10.4" height="2.2" fill="#1d2350"/>
<path d="M9 15.4 L14.4 15.2 L16.4 19.6 H10.6 Z" fill="#a9a9ab"/>
<rect x="6.2" y="16.2" width="4" height="1" fill="#8b8b8b"/></svg>
<div class="t" style="left:323.8px;top:722.1px;font-size:20.8px;line-height:27px;color:#262626;"><i class=l>img</i>_<i class=o>1</i>.<i class=l>png</i></div>
<div class="t" style="left:511.1px;top:722.1px;font-size:20.8px;line-height:27px;color:#262626;"><i class=o>1</i><i class=d>2</i>/<i class=o>11</i>/<i class=d>20</i>, <i class=d>3</i>:<i class=d>59</i>:<i class=d>07</i> <i class=l>PM</i></div>
<div class="t" style="left:742.5px;top:722.1px;font-size:20.8px;line-height:27px;color:#262626;letter-spacing:0.359px;">Png Image</div>
<div class="t" style="left:558.2px;width:600px;text-align:right;top:722.1px;font-size:20.8px;line-height:27px;color:#262626;"><i class=d>600</i><i class=l>x</i><i class=d>600</i></div>
<div class="t" style="left:1242.9px;top:722.1px;font-size:20.8px;line-height:27px;color:#262626;"><i class=d>600</i></div>
<div class="t" style="left:1349.6px;top:722.1px;font-size:20.8px;line-height:27px;color:#262626;"><i class=d>600</i></div>
<div class="t" style="left:1441.8px;top:722.1px;font-size:20.8px;line-height:27px;color:#262626;"><i class=d>360</i>.<i class=d>000</i></div>
<div class="t" style="left:1848.9px;top:722.1px;font-size:20.8px;line-height:27px;color:#262626;letter-spacing:-1.155px;">RGB</div>
<div class="t" style="left:1987.8px;top:722.1px;font-size:20.8px;line-height:27px;color:#262626;letter-spacing:-0.24px;">sRGB IEC6...</div>
<div class="t" style="left:2131.9px;top:722.1px;font-size:20.8px;line-height:27px;color:#262626;"><i class=d>0</i></div>
<div style="position:absolute;left:232.1px;top:756.7px;width:23.6px;height:24.2px;box-sizing:border-box;border:1px solid #c9c9c9;border-top-color:#bdbdbd;border-radius:6.5px;background:#fff;box-shadow:inset 0 1px 1.5px rgba(0,0,0,0.08)"></div>
<svg style="position:absolute;left:279.7px;top:755.9000000000001px;overflow:visible" width="22.8" height="27.4" viewBox="0 0 21.8 26.3" ><path d="M1 0.6 H14.6 L21.2 7.2 V24.6 Q21.2 25.8 20 25.8 H2 Q0.8 25.8 0.8 24.6 V0.8 Z" fill="#fdfdfd" stroke="#dedede" stroke-width="0.8"/>
<path d="M14.6 0.6 V7.2 H21.2" fill="#f3f3f3" stroke="#e2e2e2" stroke-width="0.7"/>
<rect x="4.6" y="7.6" width="10" height="5" fill="#97abea"/>
<rect x="4.6" y="13" width="10.4" height="2.2" fill="#1d2350"/>
<path d="M9 15.4 L14.4 15.2 L16.4 19.6 H10.6 Z" fill="#a9a9ab"/>
<rect x="6.2" y="16.2" width="4" height="1" fill="#8b8b8b"/></svg>
<div class="t" style="left:323.8px;top:755.1px;font-size:20.8px;line-height:27px;color:#262626;"><i class=l>img</i>_<i class=d>2</i>.<i class=l>png</i></div>
<div class="t" style="left:511.1px;top:755.1px;font-size:20.8px;line-height:27px;color:#262626;"><i class=o>1</i><i class=d>2</i>/<i class=o>11</i>/<i class=d>20</i>, <i class=d>3</i>:<i class=d>59</i>:<i class=o>1</i><i class=d>0</i> <i class=l>PM</i></div>
<div class="t" style="left:742.5px;top:755.1px;font-size:20.8px;line-height:27px;color:#262626;letter-spacing:0.359px;">Png Image</div>
<div class="t" style="left:557.5px;width:600px;text-align:right;top:755.1px;font-size:20.8px;line-height:27px;color:#262626;"><i class=d>500</i><i class=l>x</i><i class=d>500</i></div>
<div class="t" style="left:1242.9px;top:755.1px;font-size:20.8px;line-height:27px;color:#262626;"><i class=d>500</i></div>
<div class="t" style="left:1349.6px;top:755.1px;font-size:20.8px;line-height:27px;color:#262626;"><i class=d>500</i></div>
<div class="t" style="left:1441.8px;top:755.1px;font-size:20.8px;line-height:27px;color:#262626;"><i class=d>250</i>.<i class=d>000</i></div>
<div class="t" style="left:1848.9px;top:755.1px;font-size:20.8px;line-height:27px;color:#262626;letter-spacing:-1.155px;">RGB</div>
<div class="t" style="left:1987.8px;top:755.1px;font-size:20.8px;line-height:27px;color:#262626;letter-spacing:-0.24px;">sRGB IEC6...</div>
<div class="t" style="left:2131.9px;top:755.1px;font-size:20.8px;line-height:27px;color:#262626;"><i class=o>1</i></div>
<div style="position:absolute;left:232.1px;top:789.7px;width:23.6px;height:24.2px;box-sizing:border-box;border:1px solid #c9c9c9;border-top-color:#bdbdbd;border-radius:6.5px;background:#fff;box-shadow:inset 0 1px 1.5px rgba(0,0,0,0.08)"></div>
<svg style="position:absolute;left:279.7px;top:788.9000000000001px;overflow:visible" width="22.8" height="27.4" viewBox="0 0 21.8 26.3" ><path d="M1 0.6 H14.6 L21.2 7.2 V24.6 Q21.2 25.8 20 25.8 H2 Q0.8 25.8 0.8 24.6 V0.8 Z" fill="#fdfdfd" stroke="#dedede" stroke-width="0.8"/>
<path d="M14.6 0.6 V7.2 H21.2" fill="#f3f3f3" stroke="#e2e2e2" stroke-width="0.7"/>
<rect x="4.6" y="7.6" width="10" height="5" fill="#97abea"/>
<rect x="4.6" y="13" width="10.4" height="2.2" fill="#1d2350"/>
<path d="M9 15.4 L14.4 15.2 L16.4 19.6 H10.6 Z" fill="#a9a9ab"/>
<rect x="6.2" y="16.2" width="4" height="1" fill="#8b8b8b"/></svg>
<div class="t" style="left:323.8px;top:788.1px;font-size:20.8px;line-height:27px;color:#262626;"><i class=l>img</i>_<i class=d>3</i>.<i class=l>png</i></div>
<div class="t" style="left:511.1px;top:788.1px;font-size:20.8px;line-height:27px;color:#262626;"><i class=o>1</i><i class=d>2</i>/<i class=o>11</i>/<i class=d>20</i>, <i class=d>4</i>:<i class=d>09</i>:<i class=d>38</i> <i class=l>PM</i></div>
<div class="t" style="left:742.5px;top:788.1px;font-size:20.8px;line-height:27px;color:#262626;letter-spacing:0.359px;">Png Image</div>
<div class="t" style="left:557.5px;width:600px;text-align:right;top:788.1px;font-size:20.8px;line-height:27px;color:#262626;"><i class=d>500</i><i class=l>x</i><i class=d>500</i></div>
<div class="t" style="left:1242.9px;top:788.1px;font-size:20.8px;line-height:27px;color:#262626;"><i class=d>500</i></div>
<div class="t" style="left:1349.6px;top:788.1px;font-size:20.8px;line-height:27px;color:#262626;"><i class=d>500</i></div>
<div class="t" style="left:1441.8px;top:788.1px;font-size:20.8px;line-height:27px;color:#262626;"><i class=d>250</i>.<i class=d>000</i></div>
<div class="t" style="left:1848.9px;top:788.1px;font-size:20.8px;line-height:27px;color:#262626;letter-spacing:-1.155px;">RGB</div>
<div class="t" style="left:1987.8px;top:788.1px;font-size:20.8px;line-height:27px;color:#262626;letter-spacing:-0.24px;">sRGB IEC6...</div>
<div class="t" style="left:2131.9px;top:788.1px;font-size:20.8px;line-height:27px;color:#262626;"><i class=o>1</i></div>
<div style="position:absolute;left:232.1px;top:822.7px;width:23.6px;height:24.2px;box-sizing:border-box;border:1px solid #c9c9c9;border-top-color:#bdbdbd;border-radius:6.5px;background:#fff;box-shadow:inset 0 1px 1.5px rgba(0,0,0,0.08)"></div>
<svg style="position:absolute;left:279.7px;top:821.9000000000001px;overflow:visible" width="22.8" height="27.4" viewBox="0 0 21.8 26.3" ><path d="M1 0.6 H14.6 L21.2 7.2 V24.6 Q21.2 25.8 20 25.8 H2 Q0.8 25.8 0.8 24.6 V0.8 Z" fill="#fdfdfd" stroke="#dedede" stroke-width="0.8"/>
<path d="M14.6 0.6 V7.2 H21.2" fill="#f3f3f3" stroke="#e2e2e2" stroke-width="0.7"/>
<rect x="4.6" y="7.6" width="10" height="5" fill="#97abea"/>
<rect x="4.6" y="13" width="10.4" height="2.2" fill="#1d2350"/>
<path d="M9 15.4 L14.4 15.2 L16.4 19.6 H10.6 Z" fill="#a9a9ab"/>
<rect x="6.2" y="16.2" width="4" height="1" fill="#8b8b8b"/></svg>
<div class="t" style="left:323.8px;top:821.1px;font-size:20.8px;line-height:27px;color:#262626;"><i class=l>img</i>_<i class=d>7</i>.<i class=l>png</i></div>
<div class="t" style="left:511.1px;top:821.1px;font-size:20.8px;line-height:27px;color:#262626;"><i class=o>1</i><i class=d>2</i>/<i class=o>11</i>/<i class=d>20</i>, <i class=d>4</i>:<i class=o>1</i><i class=d>0</i>:<i class=d>42</i> <i class=l>PM</i></div>
<div class="t" style="left:742.5px;top:821.1px;font-size:20.8px;line-height:27px;color:#262626;letter-spacing:0.359px;">Png Image</div>
<div class="t" style="left:558.2px;width:600px;text-align:right;top:821.1px;font-size:20.8px;line-height:27px;color:#262626;"><i class=d>600</i><i class=l>x</i><i class=d>600</i></div>
<div class="t" style="left:1242.9px;top:821.1px;font-size:20.8px;line-height:27px;color:#262626;"><i class=d>600</i></div>
<div class="t" style="left:1349.6px;top:821.1px;font-size:20.8px;line-height:27px;color:#262626;"><i class=d>600</i></div>
<div class="t" style="left:1441.8px;top:821.1px;font-size:20.8px;line-height:27px;color:#262626;"><i class=d>360</i>.<i class=d>000</i></div>
<div class="t" style="left:1848.9px;top:821.1px;font-size:20.8px;line-height:27px;color:#262626;letter-spacing:-1.155px;">RGB</div>
<div class="t" style="left:1987.8px;top:821.1px;font-size:20.8px;line-height:27px;color:#262626;letter-spacing:-0.24px;">sRGB IEC6...</div>
<div class="t" style="left:2131.9px;top:821.1px;font-size:20.8px;line-height:27px;color:#262626;"><i class=d>0</i></div>
<div style="position:absolute;left:232.1px;top:855.7px;width:23.6px;height:24.2px;box-sizing:border-box;border:1px solid #c9c9c9;border-top-color:#bdbdbd;border-radius:6.5px;background:#fff;box-shadow:inset 0 1px 1.5px rgba(0,0,0,0.08)"></div>
<svg style="position:absolute;left:279.7px;top:854.9000000000001px;overflow:visible" width="22.8" height="27.4" viewBox="0 0 21.8 26.3" ><path d="M1 0.6 H14.6 L21.2 7.2 V24.6 Q21.2 25.8 20 25.8 H2 Q0.8 25.8 0.8 24.6 V0.8 Z" fill="#fdfdfd" stroke="#dedede" stroke-width="0.8"/>
<path d="M14.6 0.6 V7.2 H21.2" fill="#f3f3f3" stroke="#e2e2e2" stroke-width="0.7"/>
<rect x="4.6" y="7.6" width="10" height="5" fill="#97abea"/>
<rect x="4.6" y="13" width="10.4" height="2.2" fill="#1d2350"/>
<path d="M9 15.4 L14.4 15.2 L16.4 19.6 H10.6 Z" fill="#a9a9ab"/>
<rect x="6.2" y="16.2" width="4" height="1" fill="#8b8b8b"/></svg>
<div class="t" style="left:323.8px;top:854.1px;font-size:20.8px;line-height:27px;color:#262626;"><i class=l>img</i>_<i class=d>6</i>.<i class=l>png</i></div>
<div class="t" style="left:511.1px;top:854.1px;font-size:20.8px;line-height:27px;color:#262626;"><i class=o>1</i><i class=d>2</i>/<i class=o>11</i>/<i class=d>20</i>, <i class=d>4</i>:<i class=o>1</i><i class=d>0</i>:<i class=d>42</i> <i class=l>PM</i></div>
<div class="t" style="left:742.5px;top:854.1px;font-size:20.8px;line-height:27px;color:#262626;letter-spacing:0.359px;">Png Image</div>
<div class="t" style="left:556.5px;width:600px;text-align:right;top:854.1px;font-size:20.8px;line-height:27px;color:#262626;"><i class=d>600</i><i class=l>x</i><i class=d>597</i></div>
<div class="t" style="left:1242.9px;top:854.1px;font-size:20.8px;line-height:27px;color:#262626;"><i class=d>600</i></div>
<div class="t" style="left:1349.6px;top:854.1px;font-size:20.8px;line-height:27px;color:#262626;"><i class=d>597</i></div>
<div class="t" style="left:1441.8px;top:854.1px;font-size:20.8px;line-height:27px;color:#262626;"><i class=d>358</i>.<i class=d>200</i></div>
<div class="t" style="left:1848.9px;top:854.1px;font-size:20.8px;line-height:27px;color:#262626;letter-spacing:-1.155px;">RGB</div>
<div class="t" style="left:1987.8px;top:854.1px;font-size:20.8px;line-height:27px;color:#262626;letter-spacing:-0.24px;">sRGB IEC6...</div>
<div class="t" style="left:2131.9px;top:854.1px;font-size:20.8px;line-height:27px;color:#262626;"><i class=d>0</i></div>
<div style="position:absolute;left:232.1px;top:888.7px;width:23.6px;height:24.2px;box-sizing:border-box;border:1px solid #c9c9c9;border-top-color:#bdbdbd;border-radius:6.5px;background:#fff;box-shadow:inset 0 1px 1.5px rgba(0,0,0,0.08)"></div>
<svg style="position:absolute;left:279.7px;top:887.9000000000001px;overflow:visible" width="22.8" height="27.4" viewBox="0 0 21.8 26.3" ><path d="M1 0.6 H14.6 L21.2 7.2 V24.6 Q21.2 25.8 20 25.8 H2 Q0.8 25.8 0.8 24.6 V0.8 Z" fill="#fdfdfd" stroke="#dedede" stroke-width="0.8"/>
<path d="M14.6 0.6 V7.2 H21.2" fill="#f3f3f3" stroke="#e2e2e2" stroke-width="0.7"/>
<rect x="4.6" y="7.6" width="10" height="5" fill="#97abea"/>
<rect x="4.6" y="13" width="10.4" height="2.2" fill="#1d2350"/>
<path d="M9 15.4 L14.4 15.2 L16.4 19.6 H10.6 Z" fill="#a9a9ab"/>
<rect x="6.2" y="16.2" width="4" height="1" fill="#8b8b8b"/></svg>
<div class="t" style="left:323.8px;top:887.1px;font-size:20.8px;line-height:27px;color:#262626;"><i class=l>img</i>_<i class=d>4</i>.<i class=l>png</i></div>
<div class="t" style="left:511.1px;top:887.1px;font-size:20.8px;line-height:27px;color:#262626;"><i class=o>1</i><i class=d>2</i>/<i class=o>11</i>/<i class=d>20</i>, <i class=d>4</i>:<i class=d>09</i>:<i class=d>40</i> <i class=l>PM</i></div>
<div class="t" style="left:742.5px;top:887.1px;font-size:20.8px;line-height:27px;color:#262626;letter-spacing:0.359px;">Png Image</div>
<div class="t" style="left:557.5px;width:600px;text-align:right;top:887.1px;font-size:20.8px;line-height:27px;color:#262626;"><i class=d>500</i><i class=l>x</i><i class=d>500</i></div>
<div class="t" style="left:1242.9px;top:887.1px;font-size:20.8px;line-height:27px;color:#262626;"><i class=d>500</i></div>
<div class="t" style="left:1349.6px;top:887.1px;font-size:20.8px;line-height:27px;color:#262626;"><i class=d>500</i></div>
<div class="t" style="left:1441.8px;top:887.1px;font-size:20.8px;line-height:27px;color:#262626;"><i class=d>250</i>.<i class=d>000</i></div>
<div class="t" style="left:1848.9px;top:887.1px;font-size:20.8px;line-height:27px;color:#262626;letter-spacing:-1.155px;">RGB</div>
<div class="t" style="left:1987.8px;top:887.1px;font-size:20.8px;line-height:27px;color:#262626;letter-spacing:-0.24px;">sRGB IEC6...</div>
<div class="t" style="left:2131.9px;top:887.1px;font-size:20.8px;line-height:27px;color:#262626;"><i class=o>1</i></div>
<div style="position:absolute;left:232.1px;top:921.7px;width:23.6px;height:24.2px;box-sizing:border-box;border:1px solid #c9c9c9;border-top-color:#bdbdbd;border-radius:6.5px;background:#fff;box-shadow:inset 0 1px 1.5px rgba(0,0,0,0.08)"></div>
<svg style="position:absolute;left:279.7px;top:920.9000000000001px;overflow:visible" width="22.8" height="27.4" viewBox="0 0 21.8 26.3" ><path d="M1 0.6 H14.6 L21.2 7.2 V24.6 Q21.2 25.8 20 25.8 H2 Q0.8 25.8 0.8 24.6 V0.8 Z" fill="#fdfdfd" stroke="#dedede" stroke-width="0.8"/>
<path d="M14.6 0.6 V7.2 H21.2" fill="#f3f3f3" stroke="#e2e2e2" stroke-width="0.7"/>
<rect x="4.6" y="7.6" width="10" height="5" fill="#97abea"/>
<rect x="4.6" y="13" width="10.4" height="2.2" fill="#1d2350"/>
<path d="M9 15.4 L14.4 15.2 L16.4 19.6 H10.6 Z" fill="#a9a9ab"/>
<rect x="6.2" y="16.2" width="4" height="1" fill="#8b8b8b"/></svg>
<div class="t" style="left:323.8px;top:920.1px;font-size:20.8px;line-height:27px;color:#262626;"><i class=l>img</i>_<i class=d>5</i>.<i class=l>png</i></div>
<div class="t" style="left:511.1px;top:920.1px;font-size:20.8px;line-height:27px;color:#262626;"><i class=o>1</i><i class=d>2</i>/<i class=o>11</i>/<i class=d>20</i>, <i class=d>4</i>:<i class=o>1</i><i class=d>0</i>:<i class=d>04</i> <i class=l>PM</i></div>
<div class="t" style="left:742.5px;top:920.1px;font-size:20.8px;line-height:27px;color:#262626;letter-spacing:0.359px;">Png Image</div>
<div class="t" style="left:556.5px;width:600px;text-align:right;top:920.1px;font-size:20.8px;line-height:27px;color:#262626;"><i class=d>600</i><i class=l>x</i><i class=d>597</i></div>
<div class="t" style="left:1242.9px;top:920.1px;font-size:20.8px;line-height:27px;color:#262626;"><i class=d>600</i></div>
<div class="t" style="left:1349.6px;top:920.1px;font-size:20.8px;line-height:27px;color:#262626;"><i class=d>597</i></div>
<div class="t" style="left:1441.8px;top:920.1px;font-size:20.8px;line-height:27px;color:#262626;"><i class=d>358</i>.<i class=d>200</i></div>
<div class="t" style="left:1848.9px;top:920.1px;font-size:20.8px;line-height:27px;color:#262626;letter-spacing:-1.155px;">RGB</div>
<div class="t" style="left:1987.8px;top:920.1px;font-size:20.8px;line-height:27px;color:#262626;letter-spacing:-0.24px;">sRGB IEC6...</div>
<div class="t" style="left:2131.9px;top:920.1px;font-size:20.8px;line-height:27px;color:#262626;"><i class=d>0</i></div>
<div style="position:absolute;left:232.1px;top:954.7px;width:23.6px;height:24.2px;box-sizing:border-box;border:1px solid #c9c9c9;border-top-color:#bdbdbd;border-radius:6.5px;background:#fff;box-shadow:inset 0 1px 1.5px rgba(0,0,0,0.08)"></div>
<svg style="position:absolute;left:279.7px;top:953.9000000000001px;overflow:visible" width="22.8" height="27.4" viewBox="0 0 21.8 26.3" ><path d="M1 0.6 H14.6 L21.2 7.2 V24.6 Q21.2 25.8 20 25.8 H2 Q0.8 25.8 0.8 24.6 V0.8 Z" fill="#fdfdfd" stroke="#dedede" stroke-width="0.8"/>
<path d="M14.6 0.6 V7.2 H21.2" fill="#f3f3f3" stroke="#e2e2e2" stroke-width="0.7"/>
<rect x="4.6" y="7.6" width="10" height="5" fill="#97abea"/>
<rect x="4.6" y="13" width="10.4" height="2.2" fill="#1d2350"/>
<path d="M9 15.4 L14.4 15.2 L16.4 19.6 H10.6 Z" fill="#a9a9ab"/>
<rect x="6.2" y="16.2" width="4" height="1" fill="#8b8b8b"/></svg>
<div class="t" style="left:323.8px;top:953.1px;font-size:20.8px;line-height:27px;color:#262626;"><i class=l>img</i>_<i class=d>8</i>.<i class=l>png</i></div>
<div class="t" style="left:511.1px;top:953.1px;font-size:20.8px;line-height:27px;color:#262626;"><i class=o>1</i><i class=d>2</i>/<i class=o>11</i>/<i class=d>20</i>, <i class=d>4</i>:<i class=o>1</i><i class=d>0</i>:<i class=d>43</i> <i class=l>PM</i></div>
<div class="t" style="left:742.5px;top:953.1px;font-size:20.8px;line-height:27px;color:#262626;letter-spacing:0.359px;">Png Image</div>
<div class="t" style="left:558.2px;width:600px;text-align:right;top:953.1px;font-size:20.8px;line-height:27px;color:#262626;"><i class=d>600</i><i class=l>x</i><i class=d>600</i></div>
<div class="t" style="left:1242.9px;top:953.1px;font-size:20.8px;line-height:27px;color:#262626;"><i class=d>600</i></div>
<div class="t" style="left:1349.6px;top:953.1px;font-size:20.8px;line-height:27px;color:#262626;"><i class=d>600</i></div>
<div class="t" style="left:1441.8px;top:953.1px;font-size:20.8px;line-height:27px;color:#262626;"><i class=d>360</i>.<i class=d>000</i></div>
<div class="t" style="left:1848.9px;top:953.1px;font-size:20.8px;line-height:27px;color:#262626;letter-spacing:-1.155px;">RGB</div>
<div class="t" style="left:1987.8px;top:953.1px;font-size:20.8px;line-height:27px;color:#262626;letter-spacing:-0.24px;">sRGB IEC6...</div>
<div class="t" style="left:2131.9px;top:953.1px;font-size:20.8px;line-height:27px;color:#262626;"><i class=d>0</i></div>
<div style="position:absolute;left:232.1px;top:987.7px;width:23.6px;height:24.2px;box-sizing:border-box;border:1px solid #c9c9c9;border-top-color:#bdbdbd;border-radius:6.5px;background:#fff;box-shadow:inset 0 1px 1.5px rgba(0,0,0,0.08)"></div>
<svg style="position:absolute;left:279.7px;top:986.9000000000001px;overflow:visible" width="22.8" height="27.4" viewBox="0 0 21.8 26.3" ><path d="M1 0.6 H14.6 L21.2 7.2 V24.6 Q21.2 25.8 20 25.8 H2 Q0.8 25.8 0.8 24.6 V0.8 Z" fill="#fdfdfd" stroke="#dedede" stroke-width="0.8"/>
<path d="M14.6 0.6 V7.2 H21.2" fill="#f3f3f3" stroke="#e2e2e2" stroke-width="0.7"/>
<rect x="4.6" y="7.6" width="10" height="5" fill="#97abea"/>
<rect x="4.6" y="13" width="10.4" height="2.2" fill="#1d2350"/>
<path d="M9 15.4 L14.4 15.2 L16.4 19.6 H10.6 Z" fill="#a9a9ab"/>
<rect x="6.2" y="16.2" width="4" height="1" fill="#8b8b8b"/></svg>
<div class="t" style="left:323.8px;top:986.1px;font-size:20.8px;line-height:27px;color:#262626;"><i class=l>img</i>_<i class=d>9</i>.<i class=l>png</i></div>
<div class="t" style="left:511.1px;top:986.1px;font-size:20.8px;line-height:27px;color:#262626;"><i class=o>1</i><i class=d>2</i>/<i class=o>11</i>/<i class=d>20</i>, <i class=d>4</i>:<i class=o>1</i><i class=d>0</i>:<i class=d>43</i> <i class=l>PM</i></div>
<div class="t" style="left:742.5px;top:986.1px;font-size:20.8px;line-height:27px;color:#262626;letter-spacing:0.359px;">Png Image</div>
<div class="t" style="left:558.2px;width:600px;text-align:right;top:986.1px;font-size:20.8px;line-height:27px;color:#262626;"><i class=d>600</i><i class=l>x</i><i class=d>600</i></div>
<div class="t" style="left:1242.9px;top:986.1px;font-size:20.8px;line-height:27px;color:#262626;"><i class=d>600</i></div>
<div class="t" style="left:1349.6px;top:986.1px;font-size:20.8px;line-height:27px;color:#262626;"><i class=d>600</i></div>
<div class="t" style="left:1441.8px;top:986.1px;font-size:20.8px;line-height:27px;color:#262626;"><i class=d>360</i>.<i class=d>000</i></div>
<div class="t" style="left:1848.9px;top:986.1px;font-size:20.8px;line-height:27px;color:#262626;letter-spacing:-1.155px;">RGB</div>
<div class="t" style="left:1987.8px;top:986.1px;font-size:20.8px;line-height:27px;color:#262626;letter-spacing:-0.24px;">sRGB IEC6...</div>
<div class="t" style="left:2131.9px;top:986.1px;font-size:20.8px;line-height:27px;color:#262626;"><i class=d>0</i></div>
<div style="position:absolute;left:232.1px;top:1020.7px;width:23.6px;height:24.2px;box-sizing:border-box;border:1px solid #c9c9c9;border-top-color:#bdbdbd;border-radius:6.5px;background:#fff;box-shadow:inset 0 1px 1.5px rgba(0,0,0,0.08)"></div>
<svg style="position:absolute;left:277px;top:1021.2px;overflow:visible" width="27.8" height="24.5" viewBox="0 0 46 41" ><defs>
<linearGradient id="fbr22" x1="0" y1="0" x2="0" y2="1"><stop offset="0" stop-color="#3f97e0"/><stop offset="1" stop-color="#4ea2e8"/></linearGradient>
<linearGradient id="ffr22" x1="0" y1="0" x2="0" y2="1"><stop offset="0" stop-color="#8acdf9"/><stop offset="0.82" stop-color="#7cc3f5"/><stop offset="0.83" stop-color="#6bb7ef"/><stop offset="1" stop-color="#63b0ec"/></linearGradient></defs>
<path d="M0 4.2 Q0 0 4.2 0 H13.5 Q15.8 0 17.4 1.6 L19.6 3.8 Q20.6 4.8 22 4.8 H41.8 Q46 4.8 46 9 V20 H0 Z" fill="url(#fbr22)"/>
<rect x="0" y="8.2" width="46" height="32.8" rx="3.6" fill="url(#ffr22)"/></svg>
<div class="t" style="left:323.8px;top:1019.1px;font-size:20.8px;line-height:27px;color:#222;letter-spacing:0.831px;font-weight:700;">Other Images</div>
<div class="t" style="left:511.1px;top:1019.1px;font-size:20.8px;line-height:27px;color:#222;letter-spacing:1.214px;font-weight:700;">12/4/21, 8:58:07 PM</div>
<div class="t" style="left:742.5px;top:1019.1px;font-size:20.8px;line-height:27px;color:#222;letter-spacing:0.741px;font-weight:700;">Folder</div>
<div style="position:absolute;left:232.1px;top:1053.7px;width:23.6px;height:24.2px;box-sizing:border-box;border:1px solid #c9c9c9;border-top-color:#bdbdbd;border-radius:6.5px;background:#fff;box-shadow:inset 0 1px 1.5px rgba(0,0,0,0.08)"></div>
<svg style="position:absolute;left:279.7px;top:1052.9px;overflow:visible" width="22.8" height="27.4" viewBox="0 0 21.8 26.3" ><path d="M1 0.6 H14.6 L21.2 7.2 V24.6 Q21.2 25.8 20 25.8 H2 Q0.8 25.8 0.8 24.6 V0.8 Z" fill="#fdfdfd" stroke="#dedede" stroke-width="0.8"/>
<path d="M14.6 0.6 V7.2 H21.2" fill="#f3f3f3" stroke="#e2e2e2" stroke-width="0.7"/>
<rect x="4.6" y="7.6" width="10" height="5" fill="#97abea"/>
<rect x="4.6" y="13" width="10.4" height="2.2" fill="#1d2350"/>
<path d="M9 15.4 L14.4 15.2 L16.4 19.6 H10.6 Z" fill="#a9a9ab"/>
<rect x="6.2" y="16.2" width="4" height="1" fill="#8b8b8b"/></svg>
<div class="t" style="left:323.8px;top:1052.1px;font-size:20.8px;line-height:27px;color:#262626;"><i class=l>img</i>_<i class=d>38</i>.<i class=l>png</i></div>
<div class="t" style="left:511.1px;top:1052.1px;font-size:20.8px;line-height:27px;color:#262626;"><i class=o>1</i><i class=d>3</i>/<i class=o>11</i>/<i class=d>20</i>, <i class=o>1</i>:<i class=d>49</i>:<i class=d>09</i> <i class=l>PM</i></div>
<div class="t" style="left:742.5px;top:1052.1px;font-size:20.8px;line-height:27px;color:#262626;letter-spacing:0.359px;">Png Image</div>
<div class="t" style="left:558.5px;width:600px;text-align:right;top:1052.1px;font-size:20.8px;line-height:27px;color:#262626;"><i class=d>640</i><i class=l>x</i><i class=d>640</i></div>
<div class="t" style="left:1242.9px;top:1052.1px;font-size:20.8px;line-height:27px;color:#262626;"><i class=d>640</i></div>
<div class="t" style="left:1349.6px;top:1052.1px;font-size:20.8px;line-height:27px;color:#262626;"><i class=d>640</i></div>
<div class="t" style="left:1441.8px;top:1052.1px;font-size:20.8px;line-height:27px;color:#262626;"><i class=d>409</i>.<i class=d>600</i></div>
<div class="t" style="left:1585.7px;top:1052.1px;font-size:20.8px;line-height:27px;color:#262626;"><i class=d>72</i></div>
<div class="t" style="left:1730.0px;top:1052.1px;font-size:20.8px;line-height:27px;color:#262626;"><i class=d>72</i></div>
<div class="t" style="left:1848.9px;top:1052.1px;font-size:20.8px;line-height:27px;color:#262626;letter-spacing:-1.155px;">RGB</div>
<div class="t" style="left:1987.8px;top:1052.1px;font-size:20.8px;line-height:27px;color:#262626;letter-spacing:-0.24px;">sRGB IEC6...</div>
<div class="t" style="left:2131.9px;top:1052.1px;font-size:20.8px;line-height:27px;color:#262626;"><i class=o>1</i></div>
<div style="position:absolute;left:232.1px;top:1086.7px;width:23.6px;height:24.2px;box-sizing:border-box;border:1px solid #c9c9c9;border-top-color:#bdbdbd;border-radius:6.5px;background:#fff;box-shadow:inset 0 1px 1.5px rgba(0,0,0,0.08)"></div>
<svg style="position:absolute;left:279.7px;top:1085.9px;overflow:visible" width="22.8" height="27.4" viewBox="0 0 21.8 26.3" ><path d="M1 0.6 H14.6 L21.2 7.2 V24.6 Q21.2 25.8 20 25.8 H2 Q0.8 25.8 0.8 24.6 V0.8 Z" fill="#fdfdfd" stroke="#dedede" stroke-width="0.8"/>
<path d="M14.6 0.6 V7.2 H21.2" fill="#f3f3f3" stroke="#e2e2e2" stroke-width="0.7"/>
<rect x="4.6" y="7.6" width="10" height="5" fill="#97abea"/>
<rect x="4.6" y="13" width="10.4" height="2.2" fill="#1d2350"/>
<path d="M9 15.4 L14.4 15.2 L16.4 19.6 H10.6 Z" fill="#a9a9ab"/>
<rect x="6.2" y="16.2" width="4" height="1" fill="#8b8b8b"/></svg>
<div class="t" style="left:323.8px;top:1085.1px;font-size:20.8px;line-height:27px;color:#262626;"><i class=l>img</i>_<i class=d>39</i>.<i class=l>png</i></div>
<div class="t" style="left:511.1px;top:1085.1px;font-size:20.8px;line-height:27px;color:#262626;"><i class=o>1</i><i class=d>3</i>/<i class=o>11</i>/<i class=d>20</i>, <i class=o>1</i>:<i class=d>53</i>:<i class=d>49</i> <i class=l>PM</i></div>
<div class="t" style="left:742.5px;top:1085.1px;font-size:20.8px;line-height:27px;color:#262626;letter-spacing:0.359px;">Png Image</div>
<div class="t" style="left:557.5px;width:600px;text-align:right;top:1085.1px;font-size:20.8px;line-height:27px;color:#262626;"><i class=d>533</i><i class=l>x</i><i class=d>492</i></div>
<div class="t" style="left:1242.9px;top:1085.1px;font-size:20.8px;line-height:27px;color:#262626;"><i class=d>533</i></div>
<div class="t" style="left:1349.6px;top:1085.1px;font-size:20.8px;line-height:27px;color:#262626;"><i class=d>492</i></div>
<div class="t" style="left:1441.8px;top:1085.1px;font-size:20.8px;line-height:27px;color:#262626;"><i class=d>262</i>.<i class=d>236</i></div>
<div class="t" style="left:1585.7px;top:1085.1px;font-size:20.8px;line-height:27px;color:#262626;"><i class=d>72</i></div>
<div class="t" style="left:1730.0px;top:1085.1px;font-size:20.8px;line-height:27px;color:#262626;"><i class=d>72</i></div>
<div class="t" style="left:1848.9px;top:1085.1px;font-size:20.8px;line-height:27px;color:#262626;letter-spacing:-1.155px;">RGB</div>
<div class="t" style="left:1987.8px;top:1085.1px;font-size:20.8px;line-height:27px;color:#262626;letter-spacing:-0.24px;">sRGB IEC6...</div>
<div class="t" style="left:2131.9px;top:1085.1px;font-size:20.8px;line-height:27px;color:#262626;"><i class=o>1</i></div>
<div style="position:absolute;left:232.1px;top:1119.7px;width:23.6px;height:24.2px;box-sizing:border-box;border:1px solid #c9c9c9;border-top-color:#bdbdbd;border-radius:6.5px;background:#fff;box-shadow:inset 0 1px 1.5px rgba(0,0,0,0.08)"></div>
<svg style="position:absolute;left:279.7px;top:1118.9px;overflow:visible" width="22.8" height="27.4" viewBox="0 0 21.8 26.3" ><path d="M1 0.6 H14.6 L21.2 7.2 V24.6 Q21.2 25.8 20 25.8 H2 Q0.8 25.8 0.8 24.6 V0.8 Z" fill="#fdfdfd" stroke="#dedede" stroke-width="0.8"/>
<path d="M14.6 0.6 V7.2 H21.2" fill="#f3f3f3" stroke="#e2e2e2" stroke-width="0.7"/>
<rect x="4.6" y="7.6" width="10" height="5" fill="#97abea"/>
<rect x="4.6" y="13" width="10.4" height="2.2" fill="#1d2350"/>
<path d="M9 15.4 L14.4 15.2 L16.4 19.6 H10.6 Z" fill="#a9a9ab"/>
<rect x="6.2" y="16.2" width="4" height="1" fill="#8b8b8b"/></svg>
<div class="t" style="left:323.8px;top:1118.1px;font-size:20.8px;line-height:27px;color:#262626;"><i class=l>img</i>_<i class=d>29</i>.<i class=l>png</i></div>
<div class="t" style="left:511.1px;top:1118.1px;font-size:20.8px;line-height:27px;color:#262626;"><i class=o>1</i><i class=d>3</i>/<i class=o>11</i>/<i class=d>20</i>, <i class=o>1</i>:<i class=d>29</i>:<i class=d>38</i> <i class=l>PM</i></div>
<div class="t" style="left:742.5px;top:1118.1px;font-size:20.8px;line-height:27px;color:#262626;letter-spacing:0.359px;">Png Image</div>
<div class="t" style="left:554.0px;width:600px;text-align:right;top:1118.1px;font-size:20.8px;line-height:27px;color:#262626;"><i class=d>540</i><i class=l>x</i><i class=d>53</i><i class=o>1</i></div>
<div class="t" style="left:1242.9px;top:1118.1px;font-size:20.8px;line-height:27px;color:#262626;"><i class=d>540</i></div>
<div class="t" style="left:1349.6px;top:1118.1px;font-size:20.8px;line-height:27px;color:#262626;"><i class=d>53</i><i class=o>1</i></div>
<div class="t" style="left:1441.8px;top:1118.1px;font-size:20.8px;line-height:27px;color:#262626;"><i class=d>286</i>.<i class=d>740</i></div>
<div class="t" style="left:1585.7px;top:1118.1px;font-size:20.8px;line-height:27px;color:#262626;"><i class=d>72</i></div>
<div class="t" style="left:1730.0px;top:1118.1px;font-size:20.8px;line-height:27px;color:#262626;"><i class=d>72</i></div>
<div class="t" style="left:1848.9px;top:1118.1px;font-size:20.8px;line-height:27px;color:#262626;letter-spacing:-1.155px;">RGB</div>
<div class="t" style="left:1987.8px;top:1118.1px;font-size:20.8px;line-height:27px;color:#262626;letter-spacing:-0.24px;">sRGB IEC6...</div>
<div class="t" style="left:2131.9px;top:1118.1px;font-size:20.8px;line-height:27px;color:#262626;"><i class=o>1</i></div>
<div style="position:absolute;left:232.1px;top:1152.7px;width:23.6px;height:24.2px;box-sizing:border-box;border:1px solid #c9c9c9;border-top-color:#bdbdbd;border-radius:6.5px;background:#fff;box-shadow:inset 0 1px 1.5px rgba(0,0,0,0.08)"></div>
<svg style="position:absolute;left:279.7px;top:1151.9px;overflow:visible" width="22.8" height="27.4" viewBox="0 0 21.8 26.3" ><path d="M1 0.6 H14.6 L21.2 7.2 V24.6 Q21.2 25.8 20 25.8 H2 Q0.8 25.8 0.8 24.6 V0.8 Z" fill="#fdfdfd" stroke="#dedede" stroke-width="0.8"/>
<path d="M14.6 0.6 V7.2 H21.2" fill="#f3f3f3" stroke="#e2e2e2" stroke-width="0.7"/>
<rect x="4.6" y="7.6" width="10" height="5" fill="#97abea"/>
<rect x="4.6" y="13" width="10.4" height="2.2" fill="#1d2350"/>
<path d="M9 15.4 L14.4 15.2 L16.4 19.6 H10.6 Z" fill="#a9a9ab"/>
<rect x="6.2" y="16.2" width="4" height="1" fill="#8b8b8b"/></svg>
<div class="t" style="left:323.8px;top:1151.1px;font-size:20.8px;line-height:27px;color:#262626;"><i class=l>img</i>_<i class=d>28</i>.<i class=l>png</i></div>
<div class="t" style="left:511.1px;top:1151.1px;font-size:20.8px;line-height:27px;color:#262626;"><i class=o>1</i><i class=d>3</i>/<i class=o>11</i>/<i class=d>20</i>, <i class=o>1</i>:<i class=d>27</i>:<i class=d>3</i><i class=o>1</i> <i class=l>PM</i></div>
<div class="t" style="left:742.5px;top:1151.1px;font-size:20.8px;line-height:27px;color:#262626;letter-spacing:0.359px;">Png Image</div>
<div class="t" style="left:557.5px;width:600px;text-align:right;top:1151.1px;font-size:20.8px;line-height:27px;color:#262626;"><i class=d>533</i><i class=l>x</i><i class=d>533</i></div>
<div class="t" style="left:1242.9px;top:1151.1px;font-size:20.8px;line-height:27px;color:#262626;"><i class=d>533</i></div>
<div class="t" style="left:1349.6px;top:1151.1px;font-size:20.8px;line-height:27px;color:#262626;"><i class=d>533</i></div>
<div class="t" style="left:1441.8px;top:1151.1px;font-size:20.8px;line-height:27px;color:#262626;"><i class=d>284</i>.<i class=d>089</i></div>
<div class="t" style="left:1585.7px;top:1151.1px;font-size:20.8px;line-height:27px;color:#262626;"><i class=d>72</i></div>
<div class="t" style="left:1730.0px;top:1151.1px;font-size:20.8px;line-height:27px;color:#262626;"><i class=d>72</i></div>
<div class="t" style="left:1848.9px;top:1151.1px;font-size:20.8px;line-height:27px;color:#262626;letter-spacing:-1.155px;">RGB</div>
<div class="t" style="left:1987.8px;top:1151.1px;font-size:20.8px;line-height:27px;color:#262626;letter-spacing:-0.24px;">sRGB IEC6...</div>
<div class="t" style="left:2131.9px;top:1151.1px;font-size:20.8px;line-height:27px;color:#262626;"><i class=o>1</i></div>
<div style="position:absolute;left:232.1px;top:1185.7px;width:23.6px;height:24.2px;box-sizing:border-box;border:1px solid #c9c9c9;border-top-color:#bdbdbd;border-radius:6.5px;background:#fff;box-shadow:inset 0 1px 1.5px rgba(0,0,0,0.08)"></div>
<svg style="position:absolute;left:279.7px;top:1184.9px;overflow:visible" width="22.8" height="27.4" viewBox="0 0 21.8 26.3" ><path d="M1 0.6 H14.6 L21.2 7.2 V24.6 Q21.2 25.8 20 25.8 H2 Q0.8 25.8 0.8 24.6 V0.8 Z" fill="#fdfdfd" stroke="#dedede" stroke-width="0.8"/>
<path d="M14.6 0.6 V7.2 H21.2" fill="#f3f3f3" stroke="#e2e2e2" stroke-width="0.7"/>
<rect x="4.6" y="7.6" width="10" height="5" fill="#97abea"/>
<rect x="4.6" y="13" width="10.4" height="2.2" fill="#1d2350"/>
<path d="M9 15.4 L14.4 15.2 L16.4 19.6 H10.6 Z" fill="#a9a9ab"/>
<rect x="6.2" y="16.2" width="4" height="1" fill="#8b8b8b"/></svg>
<div class="t" style="left:323.8px;top:1184.1px;font-size:20.8px;line-height:27px;color:#262626;"><i class=l>img</i>_<i class=d>67</i>.<i class=l>png</i></div>
<div class="t" style="left:511.1px;top:1184.1px;font-size:20.8px;line-height:27px;color:#262626;"><i class=o>1</i><i class=d>3</i>/<i class=o>11</i>/<i class=d>20</i>, <i class=d>2</i>:<i class=d>3</i><i class=o>1</i>:<i class=o>1</i><i class=d>0</i> <i class=l>PM</i></div>
<div class="t" style="left:742.5px;top:1184.1px;font-size:20.8px;line-height:27px;color:#262626;letter-spacing:0.359px;">Png Image</div>
<div class="t" style="left:557.5px;width:600px;text-align:right;top:1184.1px;font-size:20.8px;line-height:27px;color:#262626;"><i class=d>533</i><i class=l>x</i><i class=d>553</i></div>
<div class="t" style="left:1242.9px;top:1184.1px;font-size:20.8px;line-height:27px;color:#262626;"><i class=d>533</i></div>
<div class="t" style="left:1349.6px;top:1184.1px;font-size:20.8px;line-height:27px;color:#262626;"><i class=d>553</i></div>
<div class="t" style="left:1441.8px;top:1184.1px;font-size:20.8px;line-height:27px;color:#262626;"><i class=d>294</i>.<i class=d>749</i></div>
<div class="t" style="left:1585.7px;top:1184.1px;font-size:20.8px;line-height:27px;color:#262626;"><i class=d>72</i></div>
<div class="t" style="left:1730.0px;top:1184.1px;font-size:20.8px;line-height:27px;color:#262626;"><i class=d>72</i></div>
<div class="t" style="left:1848.9px;top:1184.1px;font-size:20.8px;line-height:27px;color:#262626;letter-spacing:-1.155px;">RGB</div>
<div class="t" style="left:1987.8px;top:1184.1px;font-size:20.8px;line-height:27px;color:#262626;letter-spacing:-0.24px;">sRGB IEC6...</div>
<div class="t" style="left:2131.9px;top:1184.1px;font-size:20.8px;line-height:27px;color:#262626;"><i class=o>1</i></div>
<div style="position:absolute;left:232.1px;top:1218.7px;width:23.6px;height:24.2px;box-sizing:border-box;border:1px solid #c9c9c9;border-top-color:#bdbdbd;border-radius:6.5px;background:#fff;box-shadow:inset 0 1px 1.5px rgba(0,0,0,0.08)"></div>
<svg style="position:absolute;left:279.7px;top:1217.9px;overflow:visible" width="22.8" height="27.4" viewBox="0 0 21.8 26.3" ><path d="M1 0.6 H14.6 L21.2 7.2 V24.6 Q21.2 25.8 20 25.8 H2 Q0.8 25.8 0.8 24.6 V0.8 Z" fill="#fdfdfd" stroke="#dedede" stroke-width="0.8"/>
<path d="M14.6 0.6 V7.2 H21.2" fill="#f3f3f3" stroke="#e2e2e2" stroke-width="0.7"/>
<rect x="4.6" y="7.6" width="10" height="5" fill="#97abea"/>
<rect x="4.6" y="13" width="10.4" height="2.2" fill="#1d2350"/>
<path d="M9 15.4 L14.4 15.2 L16.4 19.6 H10.6 Z" fill="#a9a9ab"/>
<rect x="6.2" y="16.2" width="4" height="1" fill="#8b8b8b"/></svg>
<div class="t" style="left:323.8px;top:1217.1px;font-size:20.8px;line-height:27px;color:#262626;"><i class=l>img</i>_<i class=d>66</i>.<i class=l>png</i></div>
<div class="t" style="left:511.1px;top:1217.1px;font-size:20.8px;line-height:27px;color:#262626;"><i class=o>1</i><i class=d>3</i>/<i class=o>11</i>/<i class=d>20</i>, <i class=d>2</i>:<i class=o>1</i><i class=d>3</i>:<i class=d>02</i> <i class=l>PM</i></div>
<div class="t" style="left:742.5px;top:1217.1px;font-size:20.8px;line-height:27px;color:#262626;letter-spacing:0.359px;">Png Image</div>
<div class="t" style="left:558.2px;width:600px;text-align:right;top:1217.1px;font-size:20.8px;line-height:27px;color:#262626;"><i class=d>600</i><i class=l>x</i><i class=d>600</i></div>
<div class="t" style="left:1242.9px;top:1217.1px;font-size:20.8px;line-height:27px;color:#262626;"><i class=d>600</i></div>
<div class="t" style="left:1349.6px;top:1217.1px;font-size:20.8px;line-height:27px;color:#262626;"><i class=d>600</i></div>
<div class="t" style="left:1441.8px;top:1217.1px;font-size:20.8px;line-height:27px;color:#262626;"><i class=d>360</i>.<i class=d>000</i></div>
<div class="t" style="left:1848.9px;top:1217.1px;font-size:20.8px;line-height:27px;color:#262626;letter-spacing:-1.155px;">RGB</div>
<div class="t" style="left:1987.8px;top:1217.1px;font-size:20.8px;line-height:27px;color:#262626;letter-spacing:-0.24px;">sRGB IEC6...</div>
<div class="t" style="left:2131.9px;top:1217.1px;font-size:20.8px;line-height:27px;color:#262626;"><i class=d>0</i></div>
<div style="position:absolute;left:232.1px;top:1251.7px;width:23.6px;height:24.2px;box-sizing:border-box;border:1px solid #c9c9c9;border-top-color:#bdbdbd;border-radius:6.5px;background:#fff;box-shadow:inset 0 1px 1.5px rgba(0,0,0,0.08)"></div>
<svg style="position:absolute;left:279.7px;top:1250.9px;overflow:visible" width="22.8" height="27.4" viewBox="0 0 21.8 26.3" ><path d="M1 0.6 H14.6 L21.2 7.2 V24.6 Q21.2 25.8 20 25.8 H2 Q0.8 25.8 0.8 24.6 V0.8 Z" fill="#fdfdfd" stroke="#dedede" stroke-width="0.8"/>
<path d="M14.6 0.6 V7.2 H21.2" fill="#f3f3f3" stroke="#e2e2e2" stroke-width="0.7"/>
<rect x="4.6" y="7.6" width="10" height="5" fill="#97abea"/>
<rect x="4.6" y="13" width="10.4" height="2.2" fill="#1d2350"/>
<path d="M9 15.4 L14.4 15.2 L16.4 19.6 H10.6 Z" fill="#a9a9ab"/>
<rect x="6.2" y="16.2" width="4" height="1" fill="#8b8b8b"/></svg>
<div class="t" style="left:323.8px;top:1250.1px;font-size:20.8px;line-height:27px;color:#262626;"><i class=l>img</i>_<i class=d>64</i>.<i class=l>png</i></div>
<div class="t" style="left:511.1px;top:1250.1px;font-size:20.8px;line-height:27px;color:#262626;"><i class=o>1</i><i class=d>3</i>/<i class=o>11</i>/<i class=d>20</i>, <i class=d>2</i>:<i class=o>1</i><i class=d>2</i>:<i class=d>58</i> <i class=l>PM</i></div>
<div class="t" style="left:742.5px;top:1250.1px;font-size:20.8px;line-height:27px;color:#262626;letter-spacing:0.359px;">Png Image</div>
<div class="t" style="left:551.1px;width:600px;text-align:right;top:1250.1px;font-size:20.8px;line-height:27px;color:#262626;"><i class=o>1</i><i class=d>00</i><i class=l>x</i><i class=o>1</i><i class=d>00</i></div>
<div class="t" style="left:1242.9px;top:1250.1px;font-size:20.8px;line-height:27px;color:#262626;"><i class=o>1</i><i class=d>00</i></div>
<div class="t" style="left:1349.6px;top:1250.1px;font-size:20.8px;line-height:27px;color:#262626;"><i class=o>1</i><i class=d>00</i></div>
<div class="t" style="left:1441.8px;top:1250.1px;font-size:20.8px;line-height:27px;color:#262626;"><i class=o>1</i><i class=d>0</i>.<i class=d>000</i></div>
<div class="t" style="left:1848.9px;top:1250.1px;font-size:20.8px;line-height:27px;color:#262626;letter-spacing:-1.155px;">RGB</div>
<div class="t" style="left:1987.8px;top:1250.1px;font-size:20.8px;line-height:27px;color:#262626;letter-spacing:-0.24px;">sRGB IEC6...</div>
<div class="t" style="left:2131.9px;top:1250.1px;font-size:20.8px;line-height:27px;color:#262626;"><i class=o>1</i></div>
<div style="position:absolute;left:232.1px;top:1284.7px;width:23.6px;height:24.2px;box-sizing:border-box;border:1px solid #c9c9c9;border-top-color:#bdbdbd;border-radius:6.5px;background:#fff;box-shadow:inset 0 1px 1.5px rgba(0,0,0,0.08)"></div>
<svg style="position:absolute;left:279.7px;top:1283.9px;overflow:visible" width="22.8" height="27.4" viewBox="0 0 21.8 26.3" ><path d="M1 0.6 H14.6 L21.2 7.2 V24.6 Q21.2 25.8 20 25.8 H2 Q0.8 25.8 0.8 24.6 V0.8 Z" fill="#fdfdfd" stroke="#dedede" stroke-width="0.8"/>
<path d="M14.6 0.6 V7.2 H21.2" fill="#f3f3f3" stroke="#e2e2e2" stroke-width="0.7"/>
<rect x="4.6" y="7.6" width="10" height="5" fill="#97abea"/>
<rect x="4.6" y="13" width="10.4" height="2.2" fill="#1d2350"/>
<path d="M9 15.4 L14.4 15.2 L16.4 19.6 H10.6 Z" fill="#a9a9ab"/>
<rect x="6.2" y="16.2" width="4" height="1" fill="#8b8b8b"/></svg>
<div class="t" style="left:323.8px;top:1283.1px;font-size:20.8px;line-height:27px;color:#262626;"><i class=l>img</i>_<i class=d>58</i>.<i class=l>png</i></div>
<div class="t" style="left:511.1px;top:1283.1px;font-size:20.8px;line-height:27px;color:#262626;"><i class=o>1</i><i class=d>3</i>/<i class=o>11</i>/<i class=d>20</i>, <i class=d>2</i>:<i class=o>1</i><i class=d>2</i>:<i class=d>26</i> <i class=l>PM</i></div>
<div class="t" style="left:742.5px;top:1283.1px;font-size:20.8px;line-height:27px;color:#262626;letter-spacing:0.359px;">Png Image</div>
<div class="t" style="left:558.2px;width:600px;text-align:right;top:1283.1px;font-size:20.8px;line-height:27px;color:#262626;"><i class=d>600</i><i class=l>x</i><i class=d>600</i></div>
<div class="t" style="left:1242.9px;top:1283.1px;font-size:20.8px;line-height:27px;color:#262626;"><i class=d>600</i></div>
<div class="t" style="left:1349.6px;top:1283.1px;font-size:20.8px;line-height:27px;color:#262626;"><i class=d>600</i></div>
<div class="t" style="left:1441.8px;top:1283.1px;font-size:20.8px;line-height:27px;color:#262626;"><i class=d>360</i>.<i class=d>000</i></div>
<div class="t" style="left:1848.9px;top:1283.1px;font-size:20.8px;line-height:27px;color:#262626;letter-spacing:-1.155px;">RGB</div>
<div class="t" style="left:1987.8px;top:1283.1px;font-size:20.8px;line-height:27px;color:#262626;letter-spacing:-0.24px;">sRGB IEC6...</div>
<div class="t" style="left:2131.9px;top:1283.1px;font-size:20.8px;line-height:27px;color:#262626;"><i class=d>0</i></div>
<div style="position:absolute;left:232.1px;top:1317.7px;width:23.6px;height:24.2px;box-sizing:border-box;border:1px solid #c9c9c9;border-top-color:#bdbdbd;border-radius:6.5px;background:#fff;box-shadow:inset 0 1px 1.5px rgba(0,0,0,0.08)"></div>
<svg style="position:absolute;left:279.7px;top:1316.9px;overflow:visible" width="22.8" height="27.4" viewBox="0 0 21.8 26.3" ><path d="M1 0.6 H14.6 L21.2 7.2 V24.6 Q21.2 25.8 20 25.8 H2 Q0.8 25.8 0.8 24.6 V0.8 Z" fill="#fdfdfd" stroke="#dedede" stroke-width="0.8"/>
<path d="M14.6 0.6 V7.2 H21.2" fill="#f3f3f3" stroke="#e2e2e2" stroke-width="0.7"/>
<rect x="4.6" y="7.6" width="10" height="5" fill="#97abea"/>
<rect x="4.6" y="13" width="10.4" height="2.2" fill="#1d2350"/>
<path d="M9 15.4 L14.4 15.2 L16.4 19.6 H10.6 Z" fill="#a9a9ab"/>
<rect x="6.2" y="16.2" width="4" height="1" fill="#8b8b8b"/></svg>
<div class="t" style="left:323.8px;top:1316.1px;font-size:20.8px;line-height:27px;color:#262626;"><i class=l>img</i>_<i class=d>59</i>.<i class=l>png</i></div>
<div class="t" style="left:511.1px;top:1316.1px;font-size:20.8px;line-height:27px;color:#262626;"><i class=o>1</i><i class=d>3</i>/<i class=o>11</i>/<i class=d>20</i>, <i class=d>2</i>:<i class=o>1</i><i class=d>2</i>:<i class=d>29</i> <i class=l>PM</i></div>
<div class="t" style="left:742.5px;top:1316.1px;font-size:20.8px;line-height:27px;color:#262626;letter-spacing:0.359px;">Png Image</div>
<div class="t" style="left:551.1px;width:600px;text-align:right;top:1316.1px;font-size:20.8px;line-height:27px;color:#262626;"><i class=o>1</i><i class=d>00</i><i class=l>x</i><i class=o>1</i><i class=d>00</i></div>
<div class="t" style="left:1242.9px;top:1316.1px;font-size:20.8px;line-height:27px;color:#262626;"><i class=o>1</i><i class=d>00</i></div>
<div class="t" style="left:1349.6px;top:1316.1px;font-size:20.8px;line-height:27px;color:#262626;"><i class=o>1</i><i class=d>00</i></div>
<div class="t" style="left:1441.8px;top:1316.1px;font-size:20.8px;line-height:27px;color:#262626;"><i class=o>1</i><i class=d>0</i>.<i class=d>000</i></div>
<div class="t" style="left:1848.9px;top:1316.1px;font-size:20.8px;line-height:27px;color:#262626;letter-spacing:-1.155px;">RGB</div>
<div class="t" style="left:1987.8px;top:1316.1px;font-size:20.8px;line-height:27px;color:#262626;letter-spacing:-0.24px;">sRGB IEC6...</div>
<div class="t" style="left:2131.9px;top:1316.1px;font-size:20.8px;line-height:27px;color:#262626;"><i class=o>1</i></div>
<div style="position:absolute;left:232.1px;top:1350.7px;width:23.6px;height:24.2px;box-sizing:border-box;border:1px solid #c9c9c9;border-top-color:#bdbdbd;border-radius:6.5px;background:#fff;box-shadow:inset 0 1px 1.5px rgba(0,0,0,0.08)"></div>
<svg style="position:absolute;left:279.7px;top:1349.9px;overflow:visible" width="22.8" height="27.4" viewBox="0 0 21.8 26.3" ><path d="M1 0.6 H14.6 L21.2 7.2 V24.6 Q21.2 25.8 20 25.8 H2 Q0.8 25.8 0.8 24.6 V0.8 Z" fill="#fdfdfd" stroke="#dedede" stroke-width="0.8"/>
<path d="M14.6 0.6 V7.2 H21.2" fill="#f3f3f3" stroke="#e2e2e2" stroke-width="0.7"/>
<rect x="4.6" y="7.6" width="10" height="5" fill="#97abea"/>
<rect x="4.6" y="13" width="10.4" height="2.2" fill="#1d2350"/>
<path d="M9 15.4 L14.4 15.2 L16.4 19.6 H10.6 Z" fill="#a9a9ab"/>
<rect x="6.2" y="16.2" width="4" height="1" fill="#8b8b8b"/></svg>
<div class="t" style="left:323.8px;top:1349.1px;font-size:20.8px;line-height:27px;color:#262626;"><i class=l>img</i>_<i class=d>65</i>.<i class=l>png</i></div>
<div class="t" style="left:511.1px;top:1349.1px;font-size:20.8px;line-height:27px;color:#262626;"><i class=o>1</i><i class=d>3</i>/<i class=o>11</i>/<i class=d>20</i>, <i class=d>2</i>:<i class=o>1</i><i class=d>2</i>:<i class=d>59</i> <i class=l>PM</i></div>
<div class="t" style="left:742.5px;top:1349.1px;font-size:20.8px;line-height:27px;color:#262626;letter-spacing:0.359px;">Png Image</div>
<div class="t" style="left:558.2px;width:600px;text-align:right;top:1349.1px;font-size:20.8px;line-height:27px;color:#262626;"><i class=d>600</i><i class=l>x</i><i class=d>600</i></div>
<div class="t" style="left:1242.9px;top:1349.1px;font-size:20.8px;line-height:27px;color:#262626;"><i class=d>600</i></div>
<div class="t" style="left:1349.6px;top:1349.1px;font-size:20.8px;line-height:27px;color:#262626;"><i class=d>600</i></div>
<div class="t" style="left:1441.8px;top:1349.1px;font-size:20.8px;line-height:27px;color:#262626;"><i class=d>360</i>.<i class=d>000</i></div>
<div class="t" style="left:1848.9px;top:1349.1px;font-size:20.8px;line-height:27px;color:#262626;letter-spacing:-1.155px;">RGB</div>
<div class="t" style="left:1987.8px;top:1349.1px;font-size:20.8px;line-height:27px;color:#262626;letter-spacing:-0.24px;">sRGB IEC6...</div>
<div class="t" style="left:2131.9px;top:1349.1px;font-size:20.8px;line-height:27px;color:#262626;"><i class=d>0</i></div>
<div style="position:absolute;left:214.0px;top:1380.9px;width:2082.5px;height:2.0px;background:#c8c8c8"></div>
<div style="position:absolute;left:214.0px;top:1382.9px;width:2082.5px;height:45.6px;background:#f1edee"></div>
<div style="position:absolute;left:214.0px;top:1382.9px;width:434.3px;height:45.6px;background:#fbfafa"></div>
<div style="position:absolute;left:256.8px;top:1383.5px;width:1.5px;height:45.0px;background:#cdcdcd"></div>
<div style="position:absolute;left:302.4px;top:1383.5px;width:1.5px;height:45.0px;background:#cdcdcd"></div>
<div style="position:absolute;left:484.4px;top:1383.5px;width:1.5px;height:45.0px;background:#cdcdcd"></div>
<div style="position:absolute;left:647.5px;top:1383.5px;width:1.5px;height:45.0px;background:#cdcdcd"></div>
<svg style="position:absolute;left:220.4px;top:1395.6000000000001px;overflow:visible" width="30" height="19.2" viewBox="0 0 30 19.2" ><path d="M1 9.6 C 6 1, 24 1, 29 9.6 C 24 18.2, 6 18.2, 1 9.6 Z" fill="none" stroke="#1e1e1e" stroke-width="2"/>
<circle cx="15" cy="9.4" r="5.6" fill="none" stroke="#1e1e1e" stroke-width="2"/>
<circle cx="15" cy="9.4" r="2.5" fill="#1e1e1e"/></svg>
<svg style="position:absolute;left:269.0px;top:1393.8px;overflow:visible" width="22.8" height="22.8" viewBox="0 0 22.8 22.8" ><circle cx="11.4" cy="11.4" r="11.4" fill="#1f1f1f"/>
<path d="M7.3 7.3 L15.5 15.5 M15.5 7.3 L7.3 15.5" stroke="#fff" stroke-width="2.3" stroke-linecap="round"/></svg>
<div class="t" style="left:314.2px;top:1391.8px;font-size:22.6px;line-height:29px;color:#222;letter-spacing:0.313px;">Any File Type</div>
<svg style="position:absolute;left:465.8px;top:1395.0px;overflow:visible" width="12.8" height="20" viewBox="0 0 12.8 20" ><path d="M1.4 7.4 L6.4 2 L11.4 7.4 M1.4 12.6 L6.4 18 L11.4 12.6" fill="none" stroke="#2a2a2a" stroke-width="2" stroke-linecap="round" stroke-linejoin="round"/></svg>
<div class="t" style="left:505.1px;top:1391.8px;font-size:22.6px;line-height:29px;color:#222;letter-spacing:0.505px;">More Filters</div>
</div></div>
<div id="menu" style="position:absolute;left:844px;top:10.5px;width:286.29999999999995px;height:1541.5px;border-radius:10.5px;background:linear-gradient(180deg,#c3e1ea 0px,#c8e2ea 40px,#d8e5ea 82px,#e4e6e9 110px,#e9e6e8 145px,#eae6e8 400px,#e9e5e7 1300px,#e7e3e7 1372px,#dedae5 1420px,#d0cce1 1460px,#c3c2df 1500px,#bcc0e0 1541px);box-shadow:0 0 0 1px rgba(0,0,0,0.14),0 12px 32px rgba(0,0,0,0.26),0 1px 7px rgba(0,0,0,0.13)"></div>
<div style="position:absolute;left:0;top:0;width:2500px;height:1563px;will-change:transform">
<svg style="position:absolute;left:978.3px;top:23.400000000000002px;overflow:visible" width="16" height="10.4" viewBox="0 0 16 10.4" ><path d="M1.6 8.4 L8 2 L14.4 8.4" fill="none" stroke="#1d2329" stroke-width="3" stroke-linecap="round" stroke-linejoin="round"/></svg>
<svg style="position:absolute;left:978.3px;top:1527.8px;overflow:visible" width="16" height="10.4" viewBox="0 0 16 10.4" ><path d="M1.6 2 L8 8.4 L14.4 2" fill="none" stroke="#1d2329" stroke-width="3" stroke-linecap="round" stroke-linejoin="round"/></svg>
<div class="t" style="left:886.4px;top:59.2px;font-size:22.6px;line-height:29px;color:#232323;letter-spacing:0.288px;">Year</div>
<div class="t" style="left:886.4px;top:97.4px;font-size:22.6px;line-height:29px;color:#232323;letter-spacing:0.458px;">Duration (Sec)</div>
<div class="t" style="left:886.4px;top:135.5px;font-size:22.6px;line-height:29px;color:#232323;letter-spacing:0.355px;">Audio BitRate</div>
<div class="t" style="left:886.4px;top:173.7px;font-size:22.6px;line-height:29px;color:#232323;letter-spacing:0.661px;">Encoding App</div>
<div class="t" style="left:886.4px;top:211.9px;font-size:22.6px;line-height:29px;color:#232323;letter-spacing:0.151px;">Sample Rate</div>
<div class="t" style="left:886.4px;top:250.1px;font-size:22.6px;line-height:29px;color:#232323;letter-spacing:0.33px;">Audio Channels</div>
<svg style="position:absolute;left:860.8px;top:295.24px;overflow:visible" width="16.4" height="15.6" viewBox="0 0 16.4 15.6" ><path d="M1.6 9.2 L6.2 14 L14.8 1.8" fill="none" stroke="#111" stroke-width="2.9" stroke-linecap="round" stroke-linejoin="round"/></svg>
<div class="t" style="left:886.4px;top:288.3px;font-size:22.6px;line-height:29px;color:#232323;letter-spacing:0.442px;">Dimensions</div>
<svg style="position:absolute;left:860.8px;top:333.43px;overflow:visible" width="16.4" height="15.6" viewBox="0 0 16.4 15.6" ><path d="M1.6 9.2 L6.2 14 L14.8 1.8" fill="none" stroke="#111" stroke-width="2.9" stroke-linecap="round" stroke-linejoin="round"/></svg>
<div class="t" style="left:886.4px;top:326.5px;font-size:22.6px;line-height:29px;color:#232323;letter-spacing:1.039px;">Width</div>
<svg style="position:absolute;left:860.8px;top:371.62px;overflow:visible" width="16.4" height="15.6" viewBox="0 0 16.4 15.6" ><path d="M1.6 9.2 L6.2 14 L14.8 1.8" fill="none" stroke="#111" stroke-width="2.9" stroke-linecap="round" stroke-linejoin="round"/></svg>
<div class="t" style="left:886.4px;top:364.7px;font-size:22.6px;line-height:29px;color:#232323;letter-spacing:0.822px;">Height</div>
<svg style="position:absolute;left:860.8px;top:409.81px;overflow:visible" width="16.4" height="15.6" viewBox="0 0 16.4 15.6" ><path d="M1.6 9.2 L6.2 14 L14.8 1.8" fill="none" stroke="#111" stroke-width="2.9" stroke-linecap="round" stroke-linejoin="round"/></svg>
<div class="t" style="left:886.4px;top:402.9px;font-size:22.6px;line-height:29px;color:#232323;letter-spacing:0.367px;">Total Pixels</div>
<svg style="position:absolute;left:860.8px;top:448.0px;overflow:visible" width="16.4" height="15.6" viewBox="0 0 16.4 15.6" ><path d="M1.6 9.2 L6.2 14 L14.8 1.8" fill="none" stroke="#111" stroke-width="2.9" stroke-linecap="round" stroke-linejoin="round"/></svg>
<div class="t" style="left:886.4px;top:441.1px;font-size:22.6px;line-height:29px;color:#232323;letter-spacing:0.328px;">Height DPI</div>
<svg style="position:absolute;left:860.8px;top:486.19px;overflow:visible" width="16.4" height="15.6" viewBox="0 0 16.4 15.6" ><path d="M1.6 9.2 L6.2 14 L14.8 1.8" fill="none" stroke="#111" stroke-width="2.9" stroke-linecap="round" stroke-linejoin="round"/></svg>
<div class="t" style="left:886.4px;top:479.3px;font-size:22.6px;line-height:29px;color:#232323;letter-spacing:0.327px;">Width DPI</div>
<svg style="position:absolute;left:860.8px;top:524.38px;overflow:visible" width="16.4" height="15.6" viewBox="0 0 16.4 15.6" ><path d="M1.6 9.2 L6.2 14 L14.8 1.8" fill="none" stroke="#111" stroke-width="2.9" stroke-linecap="round" stroke-linejoin="round"/></svg>
<div class="t" style="left:886.4px;top:517.4px;font-size:22.6px;line-height:29px;color:#232323;letter-spacing:0.378px;">Color Space</div>
<svg style="position:absolute;left:860.8px;top:562.5699999999999px;overflow:visible" width="16.4" height="15.6" viewBox="0 0 16.4 15.6" ><path d="M1.6 9.2 L6.2 14 L14.8 1.8" fill="none" stroke="#111" stroke-width="2.9" stroke-linecap="round" stroke-linejoin="round"/></svg>
<div class="t" style="left:886.4px;top:555.6px;font-size:22.6px;line-height:29px;color:#232323;letter-spacing:0.492px;">Color Profile</div>
<svg style="position:absolute;left:860.8px;top:600.76px;overflow:visible" width="16.4" height="15.6" viewBox="0 0 16.4 15.6" ><path d="M1.6 9.2 L6.2 14 L14.8 1.8" fill="none" stroke="#111" stroke-width="2.9" stroke-linecap="round" stroke-linejoin="round"/></svg>
<div class="t" style="left:886.4px;top:593.8px;font-size:22.6px;line-height:29px;color:#232323;letter-spacing:0.185px;">Alpha Channel</div>
<svg style="position:absolute;left:860.8px;top:638.9499999999999px;overflow:visible" width="16.4" height="15.6" viewBox="0 0 16.4 15.6" ><path d="M1.6 9.2 L6.2 14 L14.8 1.8" fill="none" stroke="#111" stroke-width="2.9" stroke-linecap="round" stroke-linejoin="round"/></svg>
<div class="t" style="left:886.4px;top:632.0px;font-size:22.6px;line-height:29px;color:#232323;letter-spacing:0.188px;">Creator</div>
<svg style="position:absolute;left:860.8px;top:677.14px;overflow:visible" width="16.4" height="15.6" viewBox="0 0 16.4 15.6" ><path d="M1.6 9.2 L6.2 14 L14.8 1.8" fill="none" stroke="#111" stroke-width="2.9" stroke-linecap="round" stroke-linejoin="round"/></svg>
<div class="t" style="left:886.4px;top:670.2px;font-size:22.6px;line-height:29px;color:#232323;letter-spacing:0.172px;">Video BitRate</div>
<svg style="position:absolute;left:860.8px;top:715.33px;overflow:visible" width="16.4" height="15.6" viewBox="0 0 16.4 15.6" ><path d="M1.6 9.2 L6.2 14 L14.8 1.8" fill="none" stroke="#111" stroke-width="2.9" stroke-linecap="round" stroke-linejoin="round"/></svg>
<div class="t" style="left:886.4px;top:708.4px;font-size:22.6px;line-height:29px;color:#232323;letter-spacing:0.16px;">Total BitRate</div>
<svg style="position:absolute;left:860.8px;top:753.52px;overflow:visible" width="16.4" height="15.6" viewBox="0 0 16.4 15.6" ><path d="M1.6 9.2 L6.2 14 L14.8 1.8" fill="none" stroke="#111" stroke-width="2.9" stroke-linecap="round" stroke-linejoin="round"/></svg>
<div class="t" style="left:886.4px;top:746.6px;font-size:22.6px;line-height:29px;color:#232323;letter-spacing:0.23px;">Codecs</div>
<div class="t" style="left:886.4px;top:784.8px;font-size:22.6px;line-height:29px;color:#232323;letter-spacing:0.203px;">Level</div>
<svg style="position:absolute;left:860.8px;top:829.9px;overflow:visible" width="16.4" height="15.6" viewBox="0 0 16.4 15.6" ><path d="M1.6 9.2 L6.2 14 L14.8 1.8" fill="none" stroke="#111" stroke-width="2.9" stroke-linecap="round" stroke-linejoin="round"/></svg>
<div class="t" style="left:886.4px;top:823.0px;font-size:22.6px;line-height:29px;color:#232323;letter-spacing:0.197px;">Date Added</div>
<svg style="position:absolute;left:860.8px;top:868.09px;overflow:visible" width="16.4" height="15.6" viewBox="0 0 16.4 15.6" ><path d="M1.6 9.2 L6.2 14 L14.8 1.8" fill="none" stroke="#111" stroke-width="2.9" stroke-linecap="round" stroke-linejoin="round"/></svg>
<div class="t" style="left:886.4px;top:861.2px;font-size:22.6px;line-height:29px;color:#232323;letter-spacing:0.358px;">MD5</div>
<svg style="position:absolute;left:860.8px;top:906.28px;overflow:visible" width="16.4" height="15.6" viewBox="0 0 16.4 15.6" ><path d="M1.6 9.2 L6.2 14 L14.8 1.8" fill="none" stroke="#111" stroke-width="2.9" stroke-linecap="round" stroke-linejoin="round"/></svg>
<div class="t" style="left:886.4px;top:899.3px;font-size:22.6px;line-height:29px;color:#232323;letter-spacing:0.693px;">SHA256</div>
<div style="position:absolute;left:852.3px;top:932.6px;width:269.2px;height:37.7px;border-radius:7px;background:#6698f5"></div>
<svg style="position:absolute;left:860.8px;top:944.4699999999999px;overflow:visible" width="16.4" height="15.6" viewBox="0 0 16.4 15.6" ><path d="M1.6 9.2 L6.2 14 L14.8 1.8" fill="none" stroke="#fff" stroke-width="2.9" stroke-linecap="round" stroke-linejoin="round"/></svg>
<div class="t" style="left:886.4px;top:937.5px;font-size:22.6px;line-height:29px;color:#ffffff;letter-spacing:0.273px;">Camera Make</div>
<svg style="position:absolute;left:860.8px;top:982.66px;overflow:visible" width="16.4" height="15.6" viewBox="0 0 16.4 15.6" ><path d="M1.6 9.2 L6.2 14 L14.8 1.8" fill="none" stroke="#111" stroke-width="2.9" stroke-linecap="round" stroke-linejoin="round"/></svg>
<div class="t" style="left:886.4px;top:975.7px;font-size:22.6px;line-height:29px;color:#232323;letter-spacing:0.552px;">Image Description</div>
<svg style="position:absolute;left:860.8px;top:1020.85px;overflow:visible" width="16.4" height="15.6" viewBox="0 0 16.4 15.6" ><path d="M1.6 9.2 L6.2 14 L14.8 1.8" fill="none" stroke="#111" stroke-width="2.9" stroke-linecap="round" stroke-linejoin="round"/></svg>
<div class="t" style="left:886.4px;top:1013.9px;font-size:22.6px;line-height:29px;color:#232323;letter-spacing:0.363px;">Camera Model Name</div>
<svg style="position:absolute;left:860.8px;top:1059.0399999999997px;overflow:visible" width="16.4" height="15.6" viewBox="0 0 16.4 15.6" ><path d="M1.6 9.2 L6.2 14 L14.8 1.8" fill="none" stroke="#111" stroke-width="2.9" stroke-linecap="round" stroke-linejoin="round"/></svg>
<div class="t" style="left:886.4px;top:1052.1px;font-size:22.6px;line-height:29px;color:#232323;letter-spacing:0.425px;">Owner Name</div>
<svg style="position:absolute;left:860.8px;top:1097.2299999999998px;overflow:visible" width="16.4" height="15.6" viewBox="0 0 16.4 15.6" ><path d="M1.6 9.2 L6.2 14 L14.8 1.8" fill="none" stroke="#111" stroke-width="2.9" stroke-linecap="round" stroke-linejoin="round"/></svg>
<div class="t" style="left:886.4px;top:1090.3px;font-size:22.6px;line-height:29px;color:#232323;letter-spacing:0.181px;">Serial Number</div>
<svg style="position:absolute;left:860.8px;top:1135.4199999999998px;overflow:visible" width="16.4" height="15.6" viewBox="0 0 16.4 15.6" ><path d="M1.6 9.2 L6.2 14 L14.8 1.8" fill="none" stroke="#111" stroke-width="2.9" stroke-linecap="round" stroke-linejoin="round"/></svg>
<div class="t" style="left:886.4px;top:1128.5px;font-size:22.6px;line-height:29px;color:#232323;letter-spacing:0.181px;">Copyright</div>
<svg style="position:absolute;left:860.8px;top:1173.61px;overflow:visible" width="16.4" height="15.6" viewBox="0 0 16.4 15.6" ><path d="M1.6 9.2 L6.2 14 L14.8 1.8" fill="none" stroke="#111" stroke-width="2.9" stroke-linecap="round" stroke-linejoin="round"/></svg>
<div class="t" style="left:886.4px;top:1166.7px;font-size:22.6px;line-height:29px;color:#232323;letter-spacing:0.191px;">Software</div>
<svg style="position:absolute;left:860.8px;top:1211.7999999999997px;overflow:visible" width="16.4" height="15.6" viewBox="0 0 16.4 15.6" ><path d="M1.6 9.2 L6.2 14 L14.8 1.8" fill="none" stroke="#111" stroke-width="2.9" stroke-linecap="round" stroke-linejoin="round"/></svg>
<div class="t" style="left:886.4px;top:1204.9px;font-size:22.6px;line-height:29px;color:#232323;letter-spacing:0.19px;">Date Taken</div>
<svg style="position:absolute;left:860.8px;top:1249.9899999999998px;overflow:visible" width="16.4" height="15.6" viewBox="0 0 16.4 15.6" ><path d="M1.6 9.2 L6.2 14 L14.8 1.8" fill="none" stroke="#111" stroke-width="2.9" stroke-linecap="round" stroke-linejoin="round"/></svg>
<div class="t" style="left:886.4px;top:1243.1px;font-size:22.6px;line-height:29px;color:#232323;letter-spacing:0.207px;">Lens Make</div>
<svg style="position:absolute;left:860.8px;top:1288.1799999999998px;overflow:visible" width="16.4" height="15.6" viewBox="0 0 16.4 15.6" ><path d="M1.6 9.2 L6.2 14 L14.8 1.8" fill="none" stroke="#111" stroke-width="2.9" stroke-linecap="round" stroke-linejoin="round"/></svg>
<div class="t" style="left:886.4px;top:1281.2px;font-size:22.6px;line-height:29px;color:#232323;letter-spacing:0.195px;">Lens Model</div>
<svg style="position:absolute;left:860.8px;top:1326.37px;overflow:visible" width="16.4" height="15.6" viewBox="0 0 16.4 15.6" ><path d="M1.6 9.2 L6.2 14 L14.8 1.8" fill="none" stroke="#111" stroke-width="2.9" stroke-linecap="round" stroke-linejoin="round"/></svg>
<div class="t" style="left:886.4px;top:1319.4px;font-size:22.6px;line-height:29px;color:#232323;letter-spacing:0.176px;">Lens Serial Number</div>
<svg style="position:absolute;left:860.8px;top:1364.56px;overflow:visible" width="16.4" height="15.6" viewBox="0 0 16.4 15.6" ><path d="M1.6 9.2 L6.2 14 L14.8 1.8" fill="none" stroke="#111" stroke-width="2.9" stroke-linecap="round" stroke-linejoin="round"/></svg>
<div class="t" style="left:886.4px;top:1357.6px;font-size:22.6px;line-height:29px;color:#232323;letter-spacing:-0.6px;">ISO</div>
<svg style="position:absolute;left:860.8px;top:1402.7499999999998px;overflow:visible" width="16.4" height="15.6" viewBox="0 0 16.4 15.6" ><path d="M1.6 9.2 L6.2 14 L14.8 1.8" fill="none" stroke="#111" stroke-width="2.9" stroke-linecap="round" stroke-linejoin="round"/></svg>
<div class="t" style="left:886.4px;top:1395.8px;font-size:22.6px;line-height:29px;color:#232323;letter-spacing:0.426px;">F Number</div>
<svg style="position:absolute;left:860.8px;top:1440.9399999999998px;overflow:visible" width="16.4" height="15.6" viewBox="0 0 16.4 15.6" ><path d="M1.6 9.2 L6.2 14 L14.8 1.8" fill="none" stroke="#111" stroke-width="2.9" stroke-linecap="round" stroke-linejoin="round"/></svg>
<div class="t" style="left:886.4px;top:1434.0px;font-size:22.6px;line-height:29px;color:#232323;letter-spacing:0.435px;">Focal Length</div>
<svg style="position:absolute;left:860.8px;top:1479.1299999999999px;overflow:visible" width="16.4" height="15.6" viewBox="0 0 16.4 15.6" ><path d="M1.6 9.2 L6.2 14 L14.8 1.8" fill="none" stroke="#111" stroke-width="2.9" stroke-linecap="round" stroke-linejoin="round"/></svg>
<div class="t" style="left:886.4px;top:1472.2px;font-size:22.6px;line-height:29px;color:#232323;letter-spacing:0.018px;">Flash</div>
</div>
<svg style="position:absolute;left:0;top:0;pointer-events:none;mix-blend-mode:multiply" width="2500" height="1563" viewBox="0 0 2500 1563"><g transform="translate(1752.6 404) scale(1.0)" opacity="0.42">
<g opacity="0.85">
<path d="M-36 -26 L-33 -50 Q-31 -53 -27 -50 L-12 -41 Q0 -45 12 -41 L27 -50 Q31 -53 33 -50 L36 -26 Z" fill="#b9bef3"/>
<circle cx="0" cy="0" r="43.6" fill="#b9bef3"/>
<ellipse cx="0" cy="4" rx="66" ry="17" transform="rotate(7)" fill="none" stroke="#b9bef3" stroke-width="7"/>
<rect x="-17" y="-22" width="8.5" height="19" rx="4.2" fill="#b8b8c4"/><rect x="8.5" y="-22" width="8.5" height="19" rx="4.2" fill="#b8b8c4"/>
<text x="0" y="24" font-family="Liberation Sans" font-weight="700" font-size="13" fill="#f4f4fb" text-anchor="middle" letter-spacing="1.5" transform="rotate(8)">MACGF</text>
</g>
<text x="72" y="43.5" font-family="Liberation Sans" font-weight="700" font-size="58" fill="#c9c9c9" textLength="414" lengthAdjust="spacingAndGlyphs" opacity="0.6">MACGF</text>
<path d="M283 -45 H494 L484 -16 H273 Z" fill="#b9bef3" opacity="0.8"/>
<text x="384" y="-21.5" font-family="Liberation Sans" font-size="23" fill="#ffffff" text-anchor="middle" letter-spacing="3.5" opacity="0.9">MACGF.COM</text>
<path d="M420 1.4 H495 L493 6.4 H418 Z" fill="#b9bef3" opacity="0.8"/>
</g><g transform="translate(381 1041) scale(1.2)" opacity="0.42">
<g opacity="0.85">
<path d="M-36 -26 L-33 -50 Q-31 -53 -27 -50 L-12 -41 Q0 -45 12 -41 L27 -50 Q31 -53 33 -50 L36 -26 Z" fill="#b9bef3"/>
<circle cx="0" cy="0" r="43.6" fill="#b9bef3"/>
<ellipse cx="0" cy="4" rx="66" ry="17" transform="rotate(7)" fill="none" stroke="#b9bef3" stroke-width="7"/>
<rect x="-17" y="-22" width="8.5" height="19" rx="4.2" fill="#b8b8c4"/><rect x="8.5" y="-22" width="8.5" height="19" rx="4.2" fill="#b8b8c4"/>
<text x="0" y="24" font-family="Liberation Sans" font-weight="700" font-size="13" fill="#f4f4fb" text-anchor="middle" letter-spacing="1.5" transform="rotate(8)">MACGF</text>
</g>
<text x="72" y="43.5" font-family="Liberation Sans" font-weight="700" font-size="58" fill="#c9c9c9" textLength="414" lengthAdjust="spacingAndGlyphs" opacity="0.6">MACGF</text>
<path d="M283 -45 H494 L484 -16 H273 Z" fill="#b9bef3" opacity="0.8"/>
<text x="384" y="-21.5" font-family="Liberation Sans" font-size="23" fill="#ffffff" text-anchor="middle" letter-spacing="3.5" opacity="0.9">MACGF.COM</text>
<path d="M420 1.4 H495 L493 6.4 H418 Z" fill="#b9bef3" opacity="0.8"/>
</g></svg>
</body></html>
